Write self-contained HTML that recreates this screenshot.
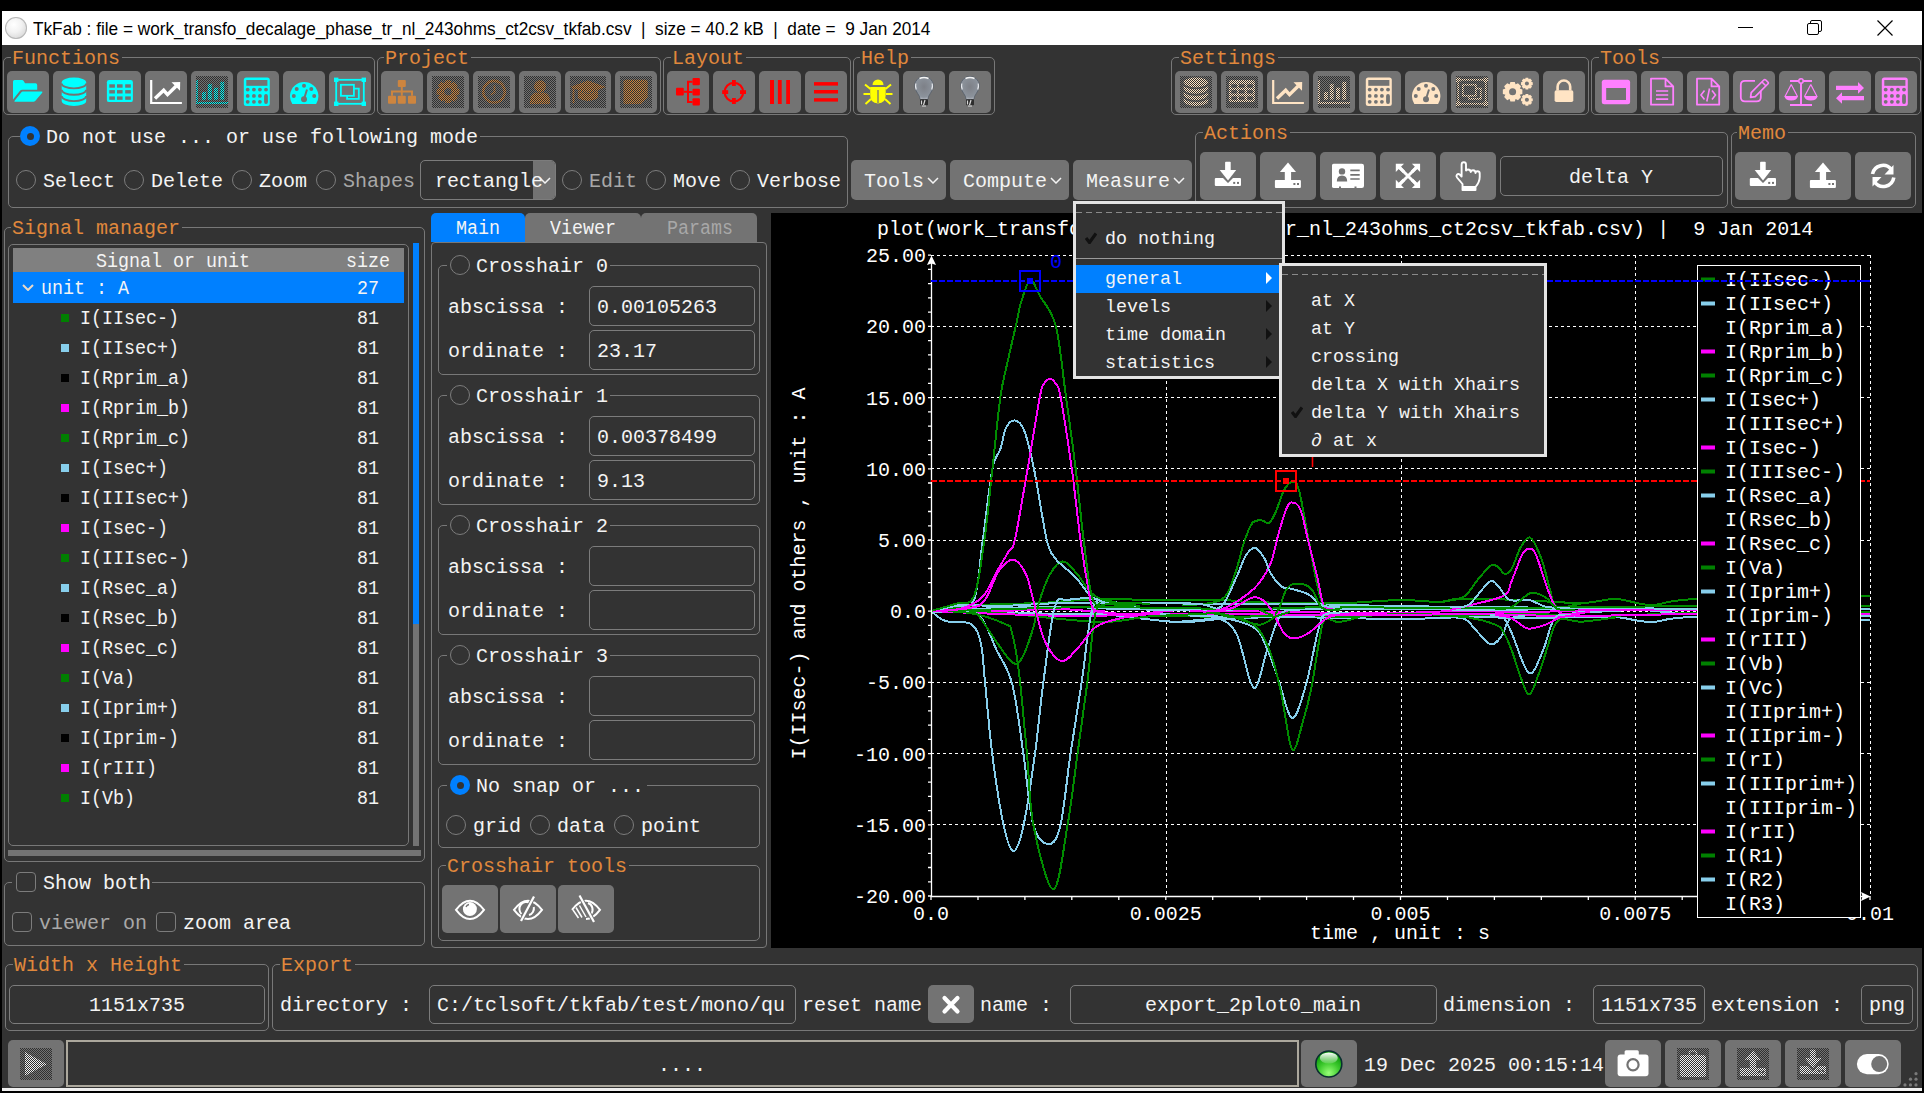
<!DOCTYPE html><html><head><meta charset="utf-8"><style>
html,body{margin:0;padding:0;background:#000;width:1924px;height:1093px;overflow:hidden}
body>div,body>svg,.a{position:absolute}
.m{font-family:"Liberation Mono",monospace;font-size:20px;line-height:20px;white-space:pre}
.s{font-family:"Liberation Sans",sans-serif}
</style></head><body>

<div style="left:2px;top:11px;width:1920px;height:34px;background:#fff"></div>
<div style="left:2px;top:45px;width:1920px;height:1043px;background:#333333"></div>
<div style="left:2px;top:1088px;width:1920px;height:3px;background:#f0f0f0"></div>
<div style="left:5px;top:17px;width:22px;height:22px;border-radius:50%;background:radial-gradient(circle at 40% 35%,#fff 0,#f2f2f2 40%,#c8c8c8 100%);box-shadow:inset 0 0 0 1px #b8b8b8"></div>
<div class="s" style="left:33px;top:19px;font-size:19px;line-height:20px;color:#000;white-space:pre;transform:scaleX(0.906);transform-origin:0 0">TkFab : file = work_transfo_decalage_phase_tr_nl_243ohms_ct2csv_tkfab.csv  |  size = 40.2 kB  |  date =  9 Jan 2014</div>
<div style="left:1738px;top:27px;width:15px;height:1px;background:#000"></div>
<svg style="left:1805px;top:18px" width="20" height="20"><rect x="2.5" y="5.5" width="11" height="11" rx="1.5" fill="none" stroke="#000" stroke-width="1"/><path d="M5.5 5.5 V4 a1.5 1.5 0 0 1 1.5 -1.5 H15 a1.5 1.5 0 0 1 1.5 1.5 V12 a1.5 1.5 0 0 1 -1.5 1.5 H13.5" fill="none" stroke="#000" stroke-width="1"/></svg>
<svg style="left:1876px;top:19px" width="18" height="18"><path d="M1.5 1.5 L16.5 16.5 M16.5 1.5 L1.5 16.5" stroke="#000" stroke-width="1.2"/></svg>
<div style="left:3px;top:57px;width:372px;height:58px;border:1px solid #787878;border-radius:5px;box-sizing:border-box"></div>
<div class="m" style="left:11px;top:49px;color:#e0883c;background:#333333;padding:0 2px 0 1px;">Functions</div>
<div style="left:377px;top:57px;width:284px;height:58px;border:1px solid #787878;border-radius:5px;box-sizing:border-box"></div>
<div class="m" style="left:384px;top:49px;color:#e0883c;background:#333333;padding:0 2px 0 1px;">Project</div>
<div style="left:663px;top:57px;width:188px;height:58px;border:1px solid #787878;border-radius:5px;box-sizing:border-box"></div>
<div class="m" style="left:671px;top:49px;color:#e0883c;background:#333333;padding:0 2px 0 1px;">Layout</div>
<div style="left:853px;top:57px;width:142px;height:58px;border:1px solid #787878;border-radius:5px;box-sizing:border-box"></div>
<div class="m" style="left:860px;top:49px;color:#e0883c;background:#333333;padding:0 2px 0 1px;">Help</div>
<div style="left:1171px;top:57px;width:418px;height:58px;border:1px solid #787878;border-radius:5px;box-sizing:border-box"></div>
<div class="m" style="left:1179px;top:49px;color:#e0883c;background:#333333;padding:0 2px 0 1px;">Settings</div>
<div style="left:1591px;top:57px;width:330px;height:58px;border:1px solid #787878;border-radius:5px;box-sizing:border-box"></div>
<div class="m" style="left:1599px;top:49px;color:#e0883c;background:#333333;padding:0 2px 0 1px;">Tools</div>
<div style="left:7px;top:71px;width:42px;height:42px;background:#737373;border-radius:5px"></div>
<div style="left:53px;top:71px;width:42px;height:42px;background:#737373;border-radius:5px"></div>
<div style="left:99px;top:71px;width:42px;height:42px;background:#737373;border-radius:5px"></div>
<div style="left:145px;top:71px;width:42px;height:42px;background:#737373;border-radius:5px"></div>
<div style="left:191px;top:71px;width:42px;height:42px;background:#737373;border-radius:5px"></div>
<div style="left:237px;top:71px;width:42px;height:42px;background:#737373;border-radius:5px"></div>
<div style="left:283px;top:71px;width:42px;height:42px;background:#737373;border-radius:5px"></div>
<div style="left:329px;top:71px;width:42px;height:42px;background:#737373;border-radius:5px"></div>
<svg style="left:12px;top:76px" width="32" height="32" viewBox="0 0 32 32"><path d="M1 5.5 Q1 4 2.5 4 H10 Q11 4 11.7 5 L13 7.2 H23.5 Q25.2 7.2 25.2 9 V13.8 H10.5 Q8.6 13.8 7.6 15.2 L1 23.5 Z" fill="#00ffff"/><path d="M10.6 15.6 H29.6 Q31 15.6 30.2 16.8 L23.2 25 Q22.4 25.8 21.5 25.8 H3 Q1.8 25.8 2.6 24.8 L9.4 16.3 Q9.9 15.6 10.6 15.6 Z" fill="#00ffff"/></svg>
<svg style="left:58px;top:76px" width="32" height="32" viewBox="0 0 32 32"><path d="M3.7 6.5 A12.25 5 0 0 1 28.2 6.5 V25 A12.25 5 0 0 1 3.7 25 Z" fill="#00ffff"/><path d="M3.7 7.4 A12.25 5 0 0 0 28.2 7.4 M3.7 13.8 A12.25 5 0 0 0 28.2 13.8 M3.7 20.1 A12.25 5 0 0 0 28.2 20.1" fill="none" stroke="#737373" stroke-width="1.9"/></svg>
<svg style="left:104px;top:76px" width="32" height="32" viewBox="0 0 32 32"><rect x="2.9" y="4" width="26" height="22.1" rx="2.2" fill="#00ffff"/><rect x="5.3" y="8.3" width="5.6" height="3.4" fill="#737373"/><rect x="5.3" y="14.1" width="5.6" height="3.4" fill="#737373"/><rect x="5.3" y="20.4" width="5.6" height="3.4" fill="#737373"/><rect x="13" y="8.3" width="5.6" height="3.4" fill="#737373"/><rect x="13" y="14.1" width="5.6" height="3.4" fill="#737373"/><rect x="13" y="20.4" width="5.6" height="3.4" fill="#737373"/><rect x="21.2" y="8.3" width="5.6" height="3.4" fill="#737373"/><rect x="21.2" y="14.1" width="5.6" height="3.4" fill="#737373"/><rect x="21.2" y="20.4" width="5.6" height="3.4" fill="#737373"/></svg>
<svg style="left:150px;top:76px" width="32" height="32" viewBox="0 0 32 32"><path d="M1.2 4 V27 H31.9" fill="none" stroke="#ffffff" stroke-width="2.2"/><path d="M5 22.5 L13.7 14.3 L17.5 18.6 L26 10.2" fill="none" stroke="#ffffff" stroke-width="3.4" stroke-linejoin="miter"/><path d="M21.5 6.2 L30.2 6 L30 14.7 Z" fill="#ffffff"/></svg>
<svg style="left:196px;top:76px" width="32" height="32" viewBox="0 0 32 32"><path d="M1 4 V27 H32" fill="none" stroke="#00ffff" stroke-width="1.8"/><rect x="6" y="16" width="3.9" height="7.7" fill="#00ffff"/><rect x="11.8" y="7.9" width="3.9" height="15.8" fill="#00ffff"/><rect x="18" y="11.7" width="3.9" height="12" fill="#00ffff"/><rect x="24.3" y="5.9" width="3.9" height="17.8" fill="#00ffff"/><defs><pattern id="st196_76" width="2" height="2" patternUnits="userSpaceOnUse"><rect width="1" height="1" fill="#303030"/><rect x="1" y="1" width="1" height="1" fill="#303030"/></pattern></defs><rect width="32" height="32" fill="url(#st196_76)" shape-rendering="crispEdges"/></svg>
<svg style="left:242px;top:76px" width="32" height="32" viewBox="0 0 32 32"><rect x="1.8" y="1.6" width="26" height="28.4" rx="2.5" fill="#00ffff"/><rect x="4.3" y="4" width="21.1" height="5.8" fill="#737373"/><circle cx="5.7" cy="13.6" r="1.9" fill="#737373"/><circle cx="5.7" cy="19.9" r="1.9" fill="#737373"/><circle cx="5.7" cy="25.8" r="1.9" fill="#737373"/><circle cx="11.9" cy="13.6" r="1.9" fill="#737373"/><circle cx="11.9" cy="19.9" r="1.9" fill="#737373"/><circle cx="11.9" cy="25.8" r="1.9" fill="#737373"/><circle cx="17.9" cy="13.6" r="1.9" fill="#737373"/><circle cx="17.9" cy="19.9" r="1.9" fill="#737373"/><circle cx="17.9" cy="25.8" r="1.9" fill="#737373"/><circle cx="24" cy="13.6" r="1.9" fill="#737373"/><rect x="22.1" y="18" width="3.8" height="10" rx="1.9" fill="#737373"/></svg>
<svg style="left:288px;top:76px" width="32" height="32" viewBox="0 0 32 32"><path d="M4.3 28 A14.2 14.2 0 1 1 28.1 28 Z" fill="#00ffff"/><circle cx="5.8" cy="19.9" r="2" fill="#737373"/><circle cx="8.7" cy="13" r="2" fill="#737373"/><circle cx="16" cy="9.8" r="2" fill="#737373"/><circle cx="23.3" cy="13" r="2" fill="#737373"/><circle cx="26.2" cy="19.9" r="2" fill="#737373"/><circle cx="16" cy="23.3" r="3" fill="#737373"/><path d="M16 23 L19 13.5" stroke="#737373" stroke-width="2"/></svg>
<svg style="left:334px;top:76px" width="32" height="32" viewBox="0 0 32 32"><rect x="2.2" y="3.8" width="27.6" height="24" fill="none" stroke="#00ffff" stroke-width="1.8"/><rect x="0" y="1.6" width="4.4" height="4.4" fill="#00ffff"/><rect x="27.6" y="1.6" width="4.4" height="4.4" fill="#00ffff"/><rect x="0" y="25.6" width="4.4" height="4.4" fill="#00ffff"/><rect x="27.6" y="25.6" width="4.4" height="4.4" fill="#00ffff"/><rect x="6.9" y="8.8" width="13" height="11" fill="none" stroke="#00ffff" stroke-width="1.8"/><path d="M19.9 12.6 H24.8 V22.8 H13.1 V19.8" fill="none" stroke="#00ffff" stroke-width="1.8"/></svg>
<div style="left:381px;top:71px;width:42px;height:42px;background:#737373;border-radius:5px"></div>
<div style="left:427px;top:71px;width:42px;height:42px;background:#737373;border-radius:5px"></div>
<div style="left:473px;top:71px;width:42px;height:42px;background:#737373;border-radius:5px"></div>
<div style="left:519px;top:71px;width:42px;height:42px;background:#737373;border-radius:5px"></div>
<div style="left:565px;top:71px;width:46px;height:42px;background:#737373;border-radius:5px"></div>
<div style="left:615px;top:71px;width:42px;height:42px;background:#737373;border-radius:5px"></div>
<svg style="left:386px;top:76px" width="32" height="32" viewBox="0 0 32 32"><rect x="11.8" y="4" width="8" height="7" rx="1" fill="#cd853f"/><rect x="2" y="19.8" width="8" height="8" rx="1" fill="#cd853f"/><rect x="11.8" y="19.8" width="8" height="8" rx="1" fill="#cd853f"/><rect x="22" y="19.8" width="8" height="8" rx="1" fill="#cd853f"/><path d="M15.8 11 V19.8 M6 19.8 V15.5 H26 V19.8" fill="none" stroke="#cd853f" stroke-width="2"/></svg>
<svg style="left:432px;top:76px" width="32" height="32" viewBox="0 0 32 32"><path d="M27.42 13.15 L27.42 18.25 L24.12 19.33 L24.30 18.88 L25.88 21.97 L22.27 25.58 L19.18 24.00 L19.63 23.82 L18.55 27.12 L13.45 27.12 L12.37 23.82 L12.82 24.00 L9.73 25.58 L6.12 21.97 L7.70 18.88 L7.88 19.33 L4.58 18.25 L4.58 13.15 L7.88 12.07 L7.70 12.52 L6.12 9.43 L9.73 5.82 L12.82 7.40 L12.37 7.58 L13.45 4.28 L18.55 4.28 L19.63 7.58 L19.18 7.40 L22.27 5.82 L25.88 9.43 L24.30 12.52 L24.12 12.07Z" fill="#cd853f"/><circle cx="16" cy="15.7" r="7.254" fill="#cd853f"/><circle cx="16" cy="15.7" r="3.6" fill="#737373"/><defs><pattern id="st432_76" width="2" height="2" patternUnits="userSpaceOnUse"><rect width="1" height="1" fill="#303030"/><rect x="1" y="1" width="1" height="1" fill="#303030"/></pattern></defs><rect width="32" height="32" fill="url(#st432_76)" shape-rendering="crispEdges"/></svg>
<svg style="left:478px;top:76px" width="32" height="32" viewBox="0 0 32 32"><circle cx="16" cy="15.7" r="10.8" fill="none" stroke="#cd853f" stroke-width="2.6"/><path d="M16.5 9.5 V16.5 L13 18.5" fill="none" stroke="#cd853f" stroke-width="1.8"/><defs><pattern id="st478_76" width="2" height="2" patternUnits="userSpaceOnUse"><rect width="1" height="1" fill="#303030"/><rect x="1" y="1" width="1" height="1" fill="#303030"/></pattern></defs><rect width="32" height="32" fill="url(#st478_76)" shape-rendering="crispEdges"/></svg>
<svg style="left:524px;top:76px" width="32" height="32" viewBox="0 0 32 32"><circle cx="16" cy="10.3" r="6" fill="#cd853f"/><path d="M5.7 27.9 Q5.7 17 12 16.5 H20 Q26.2 17 26.2 27.9 Z" fill="#cd853f"/><defs><pattern id="st524_76" width="2" height="2" patternUnits="userSpaceOnUse"><rect width="1" height="1" fill="#303030"/><rect x="1" y="1" width="1" height="1" fill="#303030"/></pattern></defs><rect width="32" height="32" fill="url(#st524_76)" shape-rendering="crispEdges"/></svg>
<svg style="left:570px;top:76px" width="36" height="32" viewBox="0 0 36 32"><path d="M0 11 L18 4.5 L36 11 L18 17.5 Z" fill="#cd853f"/><path d="M8 14 V22 Q18 28 28 22 V14 L18 18 Z" fill="#cd853f"/><path d="M3.5 12 V27" stroke="#cd853f" stroke-width="2"/><defs><pattern id="st570_76" width="2" height="2" patternUnits="userSpaceOnUse"><rect width="1" height="1" fill="#303030"/><rect x="1" y="1" width="1" height="1" fill="#303030"/></pattern></defs><rect width="36" height="32" fill="url(#st570_76)" shape-rendering="crispEdges"/></svg>
<svg style="left:620px;top:76px" width="32" height="32" viewBox="0 0 32 32"><path d="M5 3.7 H26 Q27.7 3.7 27.7 5.5 V21 L21.5 27.9 H5 Q3.5 27.9 3.5 26.2 V5.5 Q3.5 3.7 5 3.7 Z" fill="#cd853f"/><defs><pattern id="st620_76" width="2" height="2" patternUnits="userSpaceOnUse"><rect width="1" height="1" fill="#303030"/><rect x="1" y="1" width="1" height="1" fill="#303030"/></pattern></defs><rect width="32" height="32" fill="url(#st620_76)" shape-rendering="crispEdges"/></svg>
<div style="left:667px;top:71px;width:42px;height:42px;background:#737373;border-radius:5px"></div>
<div style="left:713px;top:71px;width:42px;height:42px;background:#737373;border-radius:5px"></div>
<div style="left:759px;top:71px;width:42px;height:42px;background:#737373;border-radius:5px"></div>
<div style="left:805px;top:71px;width:42px;height:42px;background:#737373;border-radius:5px"></div>
<svg style="left:672px;top:76px" width="32" height="32" viewBox="0 0 32 32"><rect x="4" y="11.8" width="7.8" height="7.8" rx="1" fill="#ff0000"/><rect x="20.5" y="2" width="7.4" height="7.3" rx="1" fill="#ff0000"/><rect x="20.5" y="12.7" width="7.4" height="6.9" rx="1" fill="#ff0000"/><rect x="20.5" y="22.2" width="7.4" height="7.4" rx="1" fill="#ff0000"/><path d="M11.8 15.7 H16 M20.5 5.7 H16 V25.9 H20.5 M16 16 H20.5" fill="none" stroke="#ff0000" stroke-width="2"/></svg>
<svg style="left:718px;top:76px" width="32" height="32" viewBox="0 0 32 32"><circle cx="15.9" cy="16.1" r="9.3" fill="none" stroke="#ff0000" stroke-width="2.2"/><rect x="14" y="4" width="3.8" height="6" fill="#ff0000"/><rect x="14" y="22" width="3.8" height="6" fill="#ff0000"/><rect x="4.2" y="14.2" width="6" height="3.8" fill="#ff0000"/><rect x="22" y="14.2" width="6" height="3.8" fill="#ff0000"/></svg>
<svg style="left:764px;top:76px" width="32" height="32" viewBox="0 0 32 32"><rect x="6" y="4" width="4" height="24" fill="#ff0000"/><rect x="13.9" y="4" width="3.8" height="24" fill="#ff0000"/><rect x="22.2" y="4" width="3.8" height="24" fill="#ff0000"/></svg>
<svg style="left:810px;top:76px" width="32" height="32" viewBox="0 0 32 32"><rect x="4" y="6.1" width="24" height="3.5" fill="#ff0000"/><rect x="4" y="14" width="24" height="3.5" fill="#ff0000"/><rect x="4" y="22.2" width="24" height="3.4" fill="#ff0000"/></svg>
<div style="left:857px;top:71px;width:42px;height:42px;background:#737373;border-radius:5px"></div>
<div style="left:903px;top:71px;width:42px;height:42px;background:#737373;border-radius:5px"></div>
<div style="left:949px;top:71px;width:42px;height:42px;background:#737373;border-radius:5px"></div>
<svg style="left:862px;top:76px" width="32" height="32" viewBox="0 0 32 32"><path d="M10.5 9 A5.5 5.5 0 0 1 21.5 9 Z" fill="#ffff00"/><path d="M8.2 11 H23.7 V19 Q23.7 27.4 16 27.4 Q8.2 27.4 8.2 19 Z" fill="#ffff00"/><path d="M8.5 13 L3 8.5 M23.5 13 L29 8.5 M8 18 H1.5 M24 18 H30.5 M9 23 L3.5 28 M23 23 L28.5 28" stroke="#ffff00" stroke-width="2"/><path d="M16 14 V27" stroke="#737373" stroke-width="1.3"/></svg>
<svg style="left:908px;top:76px" width="32" height="32" viewBox="0 0 32 32"><defs><radialGradient id="bg" cx="0.5" cy="0.45" r="0.6"><stop offset="0" stop-color="#7d8087"/><stop offset="0.75" stop-color="#8c939c"/><stop offset="1" stop-color="#c8ccd4"/></radialGradient></defs><path d="M16 0.4 A9.3 9.3 0 0 1 25.3 9.7 Q25.3 13.5 22.3 17.5 Q20 20.5 19.8 23.5 H12.2 Q12 20.5 9.7 17.5 Q6.7 13.5 6.7 9.7 A9.3 9.3 0 0 1 16 0.4 Z" fill="url(#bg)" stroke="#4e5764" stroke-width="0.7"/><path d="M11.5 2.5 Q16 0.5 20.5 2.5" stroke="#f4f4f4" stroke-width="1.6" fill="none"/><path d="M7.8 7.5 Q7.2 10.5 8.2 13.5 M24.2 7.5 Q24.8 10.5 23.8 13.5" stroke="#eef0f4" stroke-width="1.1" fill="none"/><rect x="12" y="23.3" width="8" height="6" rx="0.8" fill="#2e2e2e"/><path d="M13.5 24.5 V28.5 M17 24 L15.5 29" stroke="#d8d8d8" stroke-width="1.2"/><rect x="14" y="29.3" width="4" height="1.6" fill="#b0b0b0"/></svg>
<svg style="left:954px;top:76px" width="32" height="32" viewBox="0 0 32 32"><defs><radialGradient id="bg" cx="0.5" cy="0.45" r="0.6"><stop offset="0" stop-color="#7d8087"/><stop offset="0.75" stop-color="#8c939c"/><stop offset="1" stop-color="#c8ccd4"/></radialGradient></defs><path d="M16 0.4 A9.3 9.3 0 0 1 25.3 9.7 Q25.3 13.5 22.3 17.5 Q20 20.5 19.8 23.5 H12.2 Q12 20.5 9.7 17.5 Q6.7 13.5 6.7 9.7 A9.3 9.3 0 0 1 16 0.4 Z" fill="url(#bg)" stroke="#4e5764" stroke-width="0.7"/><path d="M11.5 2.5 Q16 0.5 20.5 2.5" stroke="#f4f4f4" stroke-width="1.6" fill="none"/><path d="M7.8 7.5 Q7.2 10.5 8.2 13.5 M24.2 7.5 Q24.8 10.5 23.8 13.5" stroke="#eef0f4" stroke-width="1.1" fill="none"/><rect x="12" y="23.3" width="8" height="6" rx="0.8" fill="#2e2e2e"/><path d="M13.5 24.5 V28.5 M17 24 L15.5 29" stroke="#d8d8d8" stroke-width="1.2"/><rect x="14" y="29.3" width="4" height="1.6" fill="#b0b0b0"/></svg>
<div style="left:1175px;top:71px;width:42px;height:42px;background:#737373;border-radius:5px"></div>
<div style="left:1221px;top:71px;width:42px;height:42px;background:#737373;border-radius:5px"></div>
<div style="left:1267px;top:71px;width:42px;height:42px;background:#737373;border-radius:5px"></div>
<div style="left:1313px;top:71px;width:42px;height:42px;background:#737373;border-radius:5px"></div>
<div style="left:1359px;top:71px;width:42px;height:42px;background:#737373;border-radius:5px"></div>
<div style="left:1405px;top:71px;width:42px;height:42px;background:#737373;border-radius:5px"></div>
<div style="left:1451px;top:71px;width:42px;height:42px;background:#737373;border-radius:5px"></div>
<div style="left:1497px;top:71px;width:42px;height:42px;background:#737373;border-radius:5px"></div>
<div style="left:1543px;top:71px;width:42px;height:42px;background:#737373;border-radius:5px"></div>
<svg style="left:1180px;top:76px" width="32" height="32" viewBox="0 0 32 32"><path d="M3.7 6.5 A12.25 5 0 0 1 28.2 6.5 V25 A12.25 5 0 0 1 3.7 25 Z" fill="#ffe4c4"/><path d="M3.7 7.4 A12.25 5 0 0 0 28.2 7.4 M3.7 13.8 A12.25 5 0 0 0 28.2 13.8 M3.7 20.1 A12.25 5 0 0 0 28.2 20.1" fill="none" stroke="#737373" stroke-width="1.9"/><defs><pattern id="st1180_76" width="2" height="2" patternUnits="userSpaceOnUse"><rect width="1" height="1" fill="#303030"/><rect x="1" y="1" width="1" height="1" fill="#303030"/></pattern></defs><rect width="32" height="32" fill="url(#st1180_76)" shape-rendering="crispEdges"/></svg>
<svg style="left:1226px;top:76px" width="32" height="32" viewBox="0 0 32 32"><rect x="2.9" y="4" width="26" height="22.1" rx="2.2" fill="#ffe4c4"/><rect x="5.3" y="8.3" width="5.6" height="3.4" fill="#737373"/><rect x="5.3" y="14.1" width="5.6" height="3.4" fill="#737373"/><rect x="5.3" y="20.4" width="5.6" height="3.4" fill="#737373"/><rect x="13" y="8.3" width="5.6" height="3.4" fill="#737373"/><rect x="13" y="14.1" width="5.6" height="3.4" fill="#737373"/><rect x="13" y="20.4" width="5.6" height="3.4" fill="#737373"/><rect x="21.2" y="8.3" width="5.6" height="3.4" fill="#737373"/><rect x="21.2" y="14.1" width="5.6" height="3.4" fill="#737373"/><rect x="21.2" y="20.4" width="5.6" height="3.4" fill="#737373"/><defs><pattern id="st1226_76" width="2" height="2" patternUnits="userSpaceOnUse"><rect width="1" height="1" fill="#303030"/><rect x="1" y="1" width="1" height="1" fill="#303030"/></pattern></defs><rect width="32" height="32" fill="url(#st1226_76)" shape-rendering="crispEdges"/></svg>
<svg style="left:1272px;top:76px" width="32" height="32" viewBox="0 0 32 32"><path d="M1.2 4 V27 H31.9" fill="none" stroke="#ffe4c4" stroke-width="2.2"/><path d="M5 22.5 L13.7 14.3 L17.5 18.6 L26 10.2" fill="none" stroke="#ffe4c4" stroke-width="3.4" stroke-linejoin="miter"/><path d="M21.5 6.2 L30.2 6 L30 14.7 Z" fill="#ffe4c4"/></svg>
<svg style="left:1318px;top:76px" width="32" height="32" viewBox="0 0 32 32"><path d="M1 4 V27 H32" fill="none" stroke="#ffe4c4" stroke-width="1.8"/><rect x="6" y="16" width="3.9" height="7.7" fill="#ffe4c4"/><rect x="11.8" y="7.9" width="3.9" height="15.8" fill="#ffe4c4"/><rect x="18" y="11.7" width="3.9" height="12" fill="#ffe4c4"/><rect x="24.3" y="5.9" width="3.9" height="17.8" fill="#ffe4c4"/><defs><pattern id="st1318_76" width="2" height="2" patternUnits="userSpaceOnUse"><rect width="1" height="1" fill="#303030"/><rect x="1" y="1" width="1" height="1" fill="#303030"/></pattern></defs><rect width="32" height="32" fill="url(#st1318_76)" shape-rendering="crispEdges"/></svg>
<svg style="left:1364px;top:76px" width="32" height="32" viewBox="0 0 32 32"><rect x="1.8" y="1.6" width="26" height="28.4" rx="2.5" fill="#ffe4c4"/><rect x="4.3" y="4" width="21.1" height="5.8" fill="#737373"/><circle cx="5.7" cy="13.6" r="1.9" fill="#737373"/><circle cx="5.7" cy="19.9" r="1.9" fill="#737373"/><circle cx="5.7" cy="25.8" r="1.9" fill="#737373"/><circle cx="11.9" cy="13.6" r="1.9" fill="#737373"/><circle cx="11.9" cy="19.9" r="1.9" fill="#737373"/><circle cx="11.9" cy="25.8" r="1.9" fill="#737373"/><circle cx="17.9" cy="13.6" r="1.9" fill="#737373"/><circle cx="17.9" cy="19.9" r="1.9" fill="#737373"/><circle cx="17.9" cy="25.8" r="1.9" fill="#737373"/><circle cx="24" cy="13.6" r="1.9" fill="#737373"/><rect x="22.1" y="18" width="3.8" height="10" rx="1.9" fill="#737373"/></svg>
<svg style="left:1410px;top:76px" width="32" height="32" viewBox="0 0 32 32"><path d="M4.3 28 A14.2 14.2 0 1 1 28.1 28 Z" fill="#ffe4c4"/><circle cx="5.8" cy="19.9" r="2" fill="#737373"/><circle cx="8.7" cy="13" r="2" fill="#737373"/><circle cx="16" cy="9.8" r="2" fill="#737373"/><circle cx="23.3" cy="13" r="2" fill="#737373"/><circle cx="26.2" cy="19.9" r="2" fill="#737373"/><circle cx="16" cy="23.3" r="3" fill="#737373"/><path d="M16 23 L19 13.5" stroke="#737373" stroke-width="2"/></svg>
<svg style="left:1456px;top:76px" width="32" height="32" viewBox="0 0 32 32"><rect x="2.2" y="3.8" width="27.6" height="24" fill="none" stroke="#ffe4c4" stroke-width="1.8"/><rect x="0" y="1.6" width="4.4" height="4.4" fill="#ffe4c4"/><rect x="27.6" y="1.6" width="4.4" height="4.4" fill="#ffe4c4"/><rect x="0" y="25.6" width="4.4" height="4.4" fill="#ffe4c4"/><rect x="27.6" y="25.6" width="4.4" height="4.4" fill="#ffe4c4"/><rect x="6.9" y="8.8" width="13" height="11" fill="none" stroke="#ffe4c4" stroke-width="1.8"/><path d="M19.9 12.6 H24.8 V22.8 H13.1 V19.8" fill="none" stroke="#ffe4c4" stroke-width="1.8"/><defs><pattern id="st1456_76" width="2" height="2" patternUnits="userSpaceOnUse"><rect width="1" height="1" fill="#303030"/><rect x="1" y="1" width="1" height="1" fill="#303030"/></pattern></defs><rect width="32" height="32" fill="url(#st1456_76)" shape-rendering="crispEdges"/></svg>
<svg style="left:1502px;top:76px" width="32" height="32" viewBox="0 0 32 32"><path d="M20.36 13.52 L20.36 17.88 L17.54 18.80 L17.70 18.42 L19.04 21.06 L15.96 24.14 L13.32 22.80 L13.70 22.64 L12.78 25.46 L8.42 25.46 L7.50 22.64 L7.88 22.80 L5.24 24.14 L2.16 21.06 L3.50 18.42 L3.66 18.80 L0.84 17.88 L0.84 13.52 L3.66 12.60 L3.50 12.98 L2.16 10.34 L5.24 7.26 L7.88 8.60 L7.50 8.76 L8.42 5.94 L12.78 5.94 L13.70 8.76 L13.32 8.60 L15.96 7.26 L19.04 10.34 L17.70 12.98 L17.54 12.60Z" fill="#ffe4c4"/><circle cx="10.6" cy="15.7" r="6.2" fill="#ffe4c4"/><circle cx="10.6" cy="15.7" r="3.5" fill="#737373"/><path d="M30.76 6.29 L30.76 8.91 L29.06 9.46 L29.16 9.23 L29.97 10.81 L28.11 12.67 L26.53 11.86 L26.76 11.76 L26.21 13.46 L23.59 13.46 L23.04 11.76 L23.27 11.86 L21.69 12.67 L19.83 10.81 L20.64 9.23 L20.74 9.46 L19.04 8.91 L19.04 6.29 L20.74 5.74 L20.64 5.97 L19.83 4.39 L21.69 2.53 L23.27 3.34 L23.04 3.44 L23.59 1.74 L26.21 1.74 L26.76 3.44 L26.53 3.34 L28.11 2.53 L29.97 4.39 L29.16 5.97 L29.06 5.74Z" fill="#ffe4c4"/><circle cx="24.9" cy="7.6" r="3.7199999999999998" fill="#ffe4c4"/><circle cx="24.9" cy="7.6" r="2" fill="#737373"/><path d="M30.76 22.49 L30.76 25.11 L29.06 25.66 L29.16 25.43 L29.97 27.01 L28.11 28.87 L26.53 28.06 L26.76 27.96 L26.21 29.66 L23.59 29.66 L23.04 27.96 L23.27 28.06 L21.69 28.87 L19.83 27.01 L20.64 25.43 L20.74 25.66 L19.04 25.11 L19.04 22.49 L20.74 21.94 L20.64 22.17 L19.83 20.59 L21.69 18.73 L23.27 19.54 L23.04 19.64 L23.59 17.94 L26.21 17.94 L26.76 19.64 L26.53 19.54 L28.11 18.73 L29.97 20.59 L29.16 22.17 L29.06 21.94Z" fill="#ffe4c4"/><circle cx="24.9" cy="23.8" r="3.7199999999999998" fill="#ffe4c4"/><circle cx="24.9" cy="23.8" r="2" fill="#737373"/></svg>
<svg style="left:1548px;top:76px" width="32" height="32" viewBox="0 0 32 32"><path d="M9.6 14.5 V10.8 A6.3 6.3 0 0 1 22.2 10.8 V14.5" fill="none" stroke="#ffe4c4" stroke-width="2.6"/><rect x="6.6" y="14.2" width="18.7" height="11.9" rx="1.8" fill="#ffe4c4"/></svg>
<div style="left:1595px;top:71px;width:42px;height:42px;background:#737373;border-radius:5px"></div>
<div style="left:1641px;top:71px;width:42px;height:42px;background:#737373;border-radius:5px"></div>
<div style="left:1687px;top:71px;width:42px;height:42px;background:#737373;border-radius:5px"></div>
<div style="left:1733px;top:71px;width:42px;height:42px;background:#737373;border-radius:5px"></div>
<div style="left:1779px;top:71px;width:46px;height:42px;background:#737373;border-radius:5px"></div>
<div style="left:1829px;top:71px;width:42px;height:42px;background:#737373;border-radius:5px"></div>
<div style="left:1875px;top:71px;width:42px;height:42px;background:#737373;border-radius:5px"></div>
<svg style="left:1600px;top:76px" width="32" height="32" viewBox="0 0 32 32"><rect x="1.8" y="3.7" width="28.3" height="24.5" rx="2.5" fill="#ff80ff"/><rect x="6.2" y="12" width="19.8" height="12" fill="#737373"/></svg>
<svg style="left:1646px;top:76px" width="32" height="32" viewBox="0 0 32 32"><path d="M5 2.7 H19.5 L27.2 10.4 V28.7 H5 Z M19.5 2.7 V10.4 H27.2" fill="none" stroke="#ff80ff" stroke-width="1.8" stroke-linejoin="round"/><path d="M10 15 H22.2 M10 19 H22.2 M10 23.1 H22.2" stroke="#ff80ff" stroke-width="1.6"/></svg>
<svg style="left:1692px;top:76px" width="32" height="32" viewBox="0 0 32 32"><path d="M5 2.7 H19.5 L27.2 10.4 V28.7 H5 Z M19.5 2.7 V10.4 H27.2" fill="none" stroke="#ff80ff" stroke-width="1.8" stroke-linejoin="round"/><path d="M12.5 14.5 L9 19 L12.5 23.5 M20 14.5 L23.5 19 L20 23.5 M17.5 12.5 L14.8 25.5" fill="none" stroke="#ff80ff" stroke-width="1.6"/></svg>
<svg style="left:1738px;top:76px" width="32" height="32" viewBox="0 0 32 32"><path d="M17 4.9 H7 Q2.8 4.9 2.8 9 V21.2 Q2.8 25.4 7 25.4 H18.6 Q22.8 25.4 22.8 21.2 V15" fill="none" stroke="#ff80ff" stroke-width="1.8"/><path d="M12.6 21.3 L13.2 16.6 L25.8 4 Q26.8 3 27.8 4 L29.8 6 Q30.8 7 29.8 8 L17.2 20.6 Z" fill="none" stroke="#ff80ff" stroke-width="1.7" stroke-linejoin="round"/><path d="M24 6 L27.8 9.8" stroke="#ff80ff" stroke-width="1.6"/></svg>
<svg style="left:1784px;top:76px" width="36" height="32" viewBox="0 0 36 32"><path d="M6 5 H28 M17 5 V28.8 M6 29 H28" stroke="#ff80ff" stroke-width="1.9"/><circle cx="17" cy="5" r="2.2" fill="#737373" stroke="#ff80ff" stroke-width="1.5"/><path d="M7.2 8.5 L1 20.5 M7.2 8.5 L13.5 20.5 M26.8 8.5 L20.5 20.5 M26.8 8.5 L33 20.5" stroke="#ff80ff" stroke-width="1.2"/><path d="M0.3 20 H14 Q13 24.6 7.2 24.6 Q1.3 24.6 0.3 20 Z M20 20 H33.7 Q32.7 24.6 26.8 24.6 Q21 24.6 20 20 Z" fill="#ff80ff"/></svg>
<svg style="left:1834px;top:76px" width="32" height="32" viewBox="0 0 32 32"><path d="M2 9.8 H24 V6 L30 12 L24 17.8 V14 H2 Z" fill="#ff80ff"/><path d="M30 20 H8 V16.3 L2 22.2 L8 27.7 V24.3 H30 Z" fill="#ff80ff"/></svg>
<svg style="left:1880px;top:76px" width="32" height="32" viewBox="0 0 32 32"><rect x="1.8" y="1.6" width="26" height="28.4" rx="2.5" fill="#ff80ff"/><rect x="4.3" y="4" width="21.1" height="5.8" fill="#737373"/><circle cx="5.7" cy="13.6" r="1.9" fill="#737373"/><circle cx="5.7" cy="19.9" r="1.9" fill="#737373"/><circle cx="5.7" cy="25.8" r="1.9" fill="#737373"/><circle cx="11.9" cy="13.6" r="1.9" fill="#737373"/><circle cx="11.9" cy="19.9" r="1.9" fill="#737373"/><circle cx="11.9" cy="25.8" r="1.9" fill="#737373"/><circle cx="17.9" cy="13.6" r="1.9" fill="#737373"/><circle cx="17.9" cy="19.9" r="1.9" fill="#737373"/><circle cx="17.9" cy="25.8" r="1.9" fill="#737373"/><circle cx="24" cy="13.6" r="1.9" fill="#737373"/><rect x="22.1" y="18" width="3.8" height="10" rx="1.9" fill="#737373"/></svg>
<div style="left:8px;top:136px;width:840px;height:72px;border:1px solid #787878;border-radius:5px;box-sizing:border-box"></div>
<div style="left:20px;top:126px;width:460px;height:20px;background:#333333"></div>
<div style="left:20px;top:126px;width:20px;height:20px;border-radius:50%;background:#0080ff"></div>
<div style="left:26.5px;top:132.5px;width:7px;height:7px;border-radius:50%;background:#333"></div>
<div class="m" style="left:46px;top:128px;color:#f4f4f4;">Do not use ... or use following mode</div>
<div style="left:16px;top:170px;width:20px;height:20px;border-radius:50%;border:1px solid #7c7c7c;box-sizing:border-box"></div>
<div class="m" style="left:43px;top:172px;color:#f4f4f4;">Select</div>
<div style="left:124px;top:170px;width:20px;height:20px;border-radius:50%;border:1px solid #7c7c7c;box-sizing:border-box"></div>
<div class="m" style="left:151px;top:172px;color:#f4f4f4;">Delete</div>
<div style="left:232px;top:170px;width:20px;height:20px;border-radius:50%;border:1px solid #7c7c7c;box-sizing:border-box"></div>
<div class="m" style="left:259px;top:172px;color:#f4f4f4;">Zoom</div>
<div style="left:316px;top:170px;width:20px;height:20px;border-radius:50%;border:1px solid #7c7c7c;box-sizing:border-box"></div>
<div class="m" style="left:343px;top:172px;color:#a8a8a8;">Shapes</div>
<div style="left:562px;top:170px;width:20px;height:20px;border-radius:50%;border:1px solid #7c7c7c;box-sizing:border-box"></div>
<div class="m" style="left:589px;top:172px;color:#a8a8a8;">Edit</div>
<div style="left:646px;top:170px;width:20px;height:20px;border-radius:50%;border:1px solid #7c7c7c;box-sizing:border-box"></div>
<div class="m" style="left:673px;top:172px;color:#f4f4f4;">Move</div>
<div style="left:730px;top:170px;width:20px;height:20px;border-radius:50%;border:1px solid #7c7c7c;box-sizing:border-box"></div>
<div class="m" style="left:757px;top:172px;color:#f4f4f4;">Verbose</div>
<div style="left:420px;top:160px;width:136px;height:40px;border:1px solid #7c7c7c;border-radius:5px;box-sizing:border-box"></div>
<div style="left:533px;top:161px;width:22px;height:38px;background:#737373;border-radius:0 4px 4px 0"></div>
<div class="m" style="left:435px;top:172px;color:#f4f4f4;">rectangle</div>
<svg style="left:539.0px;top:176.5px" width="12" height="7"><path d="M1 1 L6.0 6 L11 1" fill="none" stroke="#f4f4f4" stroke-width="1.5"/></svg>
<div style="left:851px;top:160px;width:95px;height:40px;background:#737373;border-radius:5px"></div>
<div class="m" style="left:864px;top:172px;color:#f4f4f4;">Tools</div>
<svg style="left:927.0px;top:176.5px" width="12" height="7"><path d="M1 1 L6.0 6 L11 1" fill="none" stroke="#f4f4f4" stroke-width="1.5"/></svg>
<div style="left:950px;top:160px;width:119px;height:40px;background:#737373;border-radius:5px"></div>
<div class="m" style="left:963px;top:172px;color:#f4f4f4;">Compute</div>
<svg style="left:1050.0px;top:176.5px" width="12" height="7"><path d="M1 1 L6.0 6 L11 1" fill="none" stroke="#f4f4f4" stroke-width="1.5"/></svg>
<div style="left:1073px;top:160px;width:119px;height:40px;background:#737373;border-radius:5px"></div>
<div class="m" style="left:1086px;top:172px;color:#f4f4f4;">Measure</div>
<svg style="left:1173.0px;top:176.5px" width="12" height="7"><path d="M1 1 L6.0 6 L11 1" fill="none" stroke="#f4f4f4" stroke-width="1.5"/></svg>
<div style="left:1195px;top:132px;width:533px;height:76px;border:1px solid #787878;border-radius:5px;box-sizing:border-box"></div>
<div class="m" style="left:1203px;top:124px;color:#e0883c;background:#333333;padding:0 2px 0 1px;">Actions</div>
<div style="left:1200px;top:152px;width:56px;height:48px;background:#737373;border-radius:5px"></div>
<div style="left:1260px;top:152px;width:56px;height:48px;background:#737373;border-radius:5px"></div>
<div style="left:1320px;top:152px;width:56px;height:48px;background:#737373;border-radius:5px"></div>
<div style="left:1380px;top:152px;width:56px;height:48px;background:#737373;border-radius:5px"></div>
<div style="left:1440px;top:152px;width:56px;height:48px;background:#737373;border-radius:5px"></div>
<svg style="left:1212px;top:160px" width="32" height="32" viewBox="0 0 32 32"><rect x="13.1" y="1.7" width="5.6" height="9.5" rx="0.8" fill="#ffffff"/><path d="M7.7 10.1 H24.2 L16 20.4 Z" fill="#ffffff"/><path d="M4 17.9 H11 L16 23 L21 17.9 H28 Q29 17.9 29 19 V25 Q29 26 28 26 H4 Q2.8 26 2.8 25 V19 Q2.8 17.9 4 17.9 Z" fill="#ffffff"/><rect x="21.2" y="21.9" width="2" height="2" fill="#737373"/><rect x="25" y="21.9" width="2" height="2" fill="#737373"/></svg>
<svg style="left:1272px;top:160px" width="32" height="32" viewBox="0 0 32 32"><path d="M16 2.6 L24 12 H7.9 Z" fill="#ffffff"/><rect x="12.8" y="11" width="6.3" height="9.5" rx="0.8" fill="#ffffff"/><rect x="2.9" y="20" width="26" height="7.9" rx="1" fill="#ffffff"/><rect x="21.4" y="23" width="2" height="2" fill="#737373"/><rect x="25" y="23" width="2" height="2" fill="#737373"/></svg>
<svg style="left:1332px;top:160px" width="32" height="32" viewBox="0 0 32 32"><rect x="-0.3" y="3.8" width="32.3" height="24.2" rx="2.2" fill="#ffffff"/><circle cx="10" cy="11.4" r="3.2" fill="#737373"/><path d="M4.8 21.5 Q4.8 15.5 10 15.5 Q15.2 15.5 15.2 21.5 Z" fill="#737373"/><path d="M18.3 10.4 H27.7 M18.3 14.8 H27.7 M18.3 19 H27.7" stroke="#737373" stroke-width="1.7"/><rect x="7" y="26.5" width="2" height="1.5" fill="#737373"/><rect x="22.5" y="26.5" width="2" height="1.5" fill="#737373"/></svg>
<svg style="left:1392px;top:160px" width="32" height="32" viewBox="0 0 32 32"><path d="M3.8 3.8 H12 L9 6.8 L13 10.8 L10.8 13 L6.8 9 L3.8 12 Z" fill="#ffffff"/><path d="M28.1 3.8 H19.9 L22.9 6.8 L18.9 10.8 L21.1 13 L25.1 9 L28.1 12 Z" fill="#ffffff"/><path d="M3.8 28 H12 L9 25 L13 21 L10.8 18.8 L6.8 22.8 L3.8 19.8 Z" fill="#ffffff"/><path d="M28.1 28 H19.9 L22.9 25 L18.9 21 L21.1 18.8 L25.1 22.8 L28.1 19.8 Z" fill="#ffffff"/><path d="M8 8 L24 24 M24 8 L8 24" stroke="#ffffff" stroke-width="3"/></svg>
<svg style="left:1452px;top:160px" width="32" height="32" viewBox="0 0 32 32"><path d="M10.5 27 V30 H23.5 V27 Q27.7 22 27.7 17 V13.5 Q27.7 11.3 25.4 11.3 Q23.5 11.3 23.5 13 Q23.5 10.3 21 10.3 Q19 10.3 18.7 12 Q18.5 9.5 16 9.5 Q14.5 9.5 14 10.5 V4.6 Q14 2.2 11.8 2.2 Q9.6 2.2 9.6 4.6 V16.5 L8 14.8 Q6.3 13.3 5 14.6 Q3.8 16 5 17.5 L10.5 24 Z" fill="none" stroke="#ffffff" stroke-width="1.9" stroke-linejoin="round"/><rect x="10.5" y="26" width="13" height="4" fill="#ffffff"/></svg>
<div style="left:1500px;top:156px;width:223px;height:40px;border:1px solid #7c7c7c;border-radius:5px;box-sizing:border-box"></div>
<div class="m" style="left:1569px;top:168px;color:#f4f4f4;">delta Y</div>
<div style="left:1731px;top:132px;width:185px;height:76px;border:1px solid #787878;border-radius:5px;box-sizing:border-box"></div>
<div class="m" style="left:1737px;top:124px;color:#e0883c;background:#333333;padding:0 2px 0 1px;">Memo</div>
<div style="left:1735px;top:152px;width:56px;height:48px;background:#737373;border-radius:5px"></div>
<div style="left:1795px;top:152px;width:56px;height:48px;background:#737373;border-radius:5px"></div>
<div style="left:1855px;top:152px;width:56px;height:48px;background:#737373;border-radius:5px"></div>
<svg style="left:1747px;top:160px" width="32" height="32" viewBox="0 0 32 32"><rect x="13.1" y="1.7" width="5.6" height="9.5" rx="0.8" fill="#ffffff"/><path d="M7.7 10.1 H24.2 L16 20.4 Z" fill="#ffffff"/><path d="M4 17.9 H11 L16 23 L21 17.9 H28 Q29 17.9 29 19 V25 Q29 26 28 26 H4 Q2.8 26 2.8 25 V19 Q2.8 17.9 4 17.9 Z" fill="#ffffff"/><rect x="21.2" y="21.9" width="2" height="2" fill="#737373"/><rect x="25" y="21.9" width="2" height="2" fill="#737373"/></svg>
<svg style="left:1807px;top:160px" width="32" height="32" viewBox="0 0 32 32"><path d="M16 2.6 L24 12 H7.9 Z" fill="#ffffff"/><rect x="12.8" y="11" width="6.3" height="9.5" rx="0.8" fill="#ffffff"/><rect x="2.9" y="20" width="26" height="7.9" rx="1" fill="#ffffff"/><rect x="21.4" y="23" width="2" height="2" fill="#737373"/><rect x="25" y="23" width="2" height="2" fill="#737373"/></svg>
<svg style="left:1867px;top:160px" width="32" height="32" viewBox="0 0 32 32"><path d="M5.5 14 A10.6 10.6 0 0 1 24.3 9.5" fill="none" stroke="#ffffff" stroke-width="3.6"/><path d="M26.5 5 V14.5 H17.5 Z" fill="#ffffff"/><path d="M26.8 17.5 A10.6 10.6 0 0 1 7.7 22" fill="none" stroke="#ffffff" stroke-width="3.6"/><path d="M5.5 26.5 V17 H14.5 Z" fill="#ffffff"/></svg>
<div style="left:4px;top:227px;width:421px;height:635px;border:1px solid #787878;border-radius:5px;box-sizing:border-box"></div>
<div class="m" style="left:11px;top:219px;color:#e0883c;background:#333333;padding:0 2px 0 1px;">Signal manager</div>
<div style="left:8px;top:244px;width:401px;height:602px;border:1px solid #787878;border-radius:5px;box-sizing:border-box"></div>
<div style="left:13px;top:248px;width:391px;height:24px;background:#808080"></div>
<div class="m" style="left:96px;top:252px;color:#f4f4f4;transform:scaleX(0.9167);transform-origin:0 0;">Signal or unit</div>
<div class="m" style="left:346px;top:252px;color:#f4f4f4;transform:scaleX(0.9167);transform-origin:0 0;">size</div>
<div style="left:13px;top:272px;width:391px;height:31px;background:#0080ff"></div>
<svg style="left:22.0px;top:283.5px" width="12" height="7"><path d="M1 1 L6.0 6 L11 1" fill="none" stroke="#e8d8c8" stroke-width="2"/></svg>
<div class="m" style="left:41px;top:279px;color:#f4f4f4;transform:scaleX(0.9167);transform-origin:0 0;">unit : A</div>
<div class="m" style="left:357px;top:279px;color:#f4f4f4;transform:scaleX(0.9167);transform-origin:0 0;">27</div>
<div style="left:61px;top:314px;width:8px;height:8px;background:#008000"></div>
<div class="m" style="left:80px;top:309px;color:#f4f4f4;transform:scaleX(0.9167);transform-origin:0 0;">I(IIsec-)</div>
<div class="m" style="left:357px;top:309px;color:#f4f4f4;transform:scaleX(0.9167);transform-origin:0 0;">81</div>
<div style="left:61px;top:344px;width:8px;height:8px;background:#87ceeb"></div>
<div class="m" style="left:80px;top:339px;color:#f4f4f4;transform:scaleX(0.9167);transform-origin:0 0;">I(IIsec+)</div>
<div class="m" style="left:357px;top:339px;color:#f4f4f4;transform:scaleX(0.9167);transform-origin:0 0;">81</div>
<div style="left:61px;top:374px;width:8px;height:8px;background:#000000"></div>
<div class="m" style="left:80px;top:369px;color:#f4f4f4;transform:scaleX(0.9167);transform-origin:0 0;">I(Rprim_a)</div>
<div class="m" style="left:357px;top:369px;color:#f4f4f4;transform:scaleX(0.9167);transform-origin:0 0;">81</div>
<div style="left:61px;top:404px;width:8px;height:8px;background:#ff00ff"></div>
<div class="m" style="left:80px;top:399px;color:#f4f4f4;transform:scaleX(0.9167);transform-origin:0 0;">I(Rprim_b)</div>
<div class="m" style="left:357px;top:399px;color:#f4f4f4;transform:scaleX(0.9167);transform-origin:0 0;">81</div>
<div style="left:61px;top:434px;width:8px;height:8px;background:#008000"></div>
<div class="m" style="left:80px;top:429px;color:#f4f4f4;transform:scaleX(0.9167);transform-origin:0 0;">I(Rprim_c)</div>
<div class="m" style="left:357px;top:429px;color:#f4f4f4;transform:scaleX(0.9167);transform-origin:0 0;">81</div>
<div style="left:61px;top:464px;width:8px;height:8px;background:#87ceeb"></div>
<div class="m" style="left:80px;top:459px;color:#f4f4f4;transform:scaleX(0.9167);transform-origin:0 0;">I(Isec+)</div>
<div class="m" style="left:357px;top:459px;color:#f4f4f4;transform:scaleX(0.9167);transform-origin:0 0;">81</div>
<div style="left:61px;top:494px;width:8px;height:8px;background:#000000"></div>
<div class="m" style="left:80px;top:489px;color:#f4f4f4;transform:scaleX(0.9167);transform-origin:0 0;">I(IIIsec+)</div>
<div class="m" style="left:357px;top:489px;color:#f4f4f4;transform:scaleX(0.9167);transform-origin:0 0;">81</div>
<div style="left:61px;top:524px;width:8px;height:8px;background:#ff00ff"></div>
<div class="m" style="left:80px;top:519px;color:#f4f4f4;transform:scaleX(0.9167);transform-origin:0 0;">I(Isec-)</div>
<div class="m" style="left:357px;top:519px;color:#f4f4f4;transform:scaleX(0.9167);transform-origin:0 0;">81</div>
<div style="left:61px;top:554px;width:8px;height:8px;background:#008000"></div>
<div class="m" style="left:80px;top:549px;color:#f4f4f4;transform:scaleX(0.9167);transform-origin:0 0;">I(IIIsec-)</div>
<div class="m" style="left:357px;top:549px;color:#f4f4f4;transform:scaleX(0.9167);transform-origin:0 0;">81</div>
<div style="left:61px;top:584px;width:8px;height:8px;background:#87ceeb"></div>
<div class="m" style="left:80px;top:579px;color:#f4f4f4;transform:scaleX(0.9167);transform-origin:0 0;">I(Rsec_a)</div>
<div class="m" style="left:357px;top:579px;color:#f4f4f4;transform:scaleX(0.9167);transform-origin:0 0;">81</div>
<div style="left:61px;top:614px;width:8px;height:8px;background:#000000"></div>
<div class="m" style="left:80px;top:609px;color:#f4f4f4;transform:scaleX(0.9167);transform-origin:0 0;">I(Rsec_b)</div>
<div class="m" style="left:357px;top:609px;color:#f4f4f4;transform:scaleX(0.9167);transform-origin:0 0;">81</div>
<div style="left:61px;top:644px;width:8px;height:8px;background:#ff00ff"></div>
<div class="m" style="left:80px;top:639px;color:#f4f4f4;transform:scaleX(0.9167);transform-origin:0 0;">I(Rsec_c)</div>
<div class="m" style="left:357px;top:639px;color:#f4f4f4;transform:scaleX(0.9167);transform-origin:0 0;">81</div>
<div style="left:61px;top:674px;width:8px;height:8px;background:#008000"></div>
<div class="m" style="left:80px;top:669px;color:#f4f4f4;transform:scaleX(0.9167);transform-origin:0 0;">I(Va)</div>
<div class="m" style="left:357px;top:669px;color:#f4f4f4;transform:scaleX(0.9167);transform-origin:0 0;">81</div>
<div style="left:61px;top:704px;width:8px;height:8px;background:#87ceeb"></div>
<div class="m" style="left:80px;top:699px;color:#f4f4f4;transform:scaleX(0.9167);transform-origin:0 0;">I(Iprim+)</div>
<div class="m" style="left:357px;top:699px;color:#f4f4f4;transform:scaleX(0.9167);transform-origin:0 0;">81</div>
<div style="left:61px;top:734px;width:8px;height:8px;background:#000000"></div>
<div class="m" style="left:80px;top:729px;color:#f4f4f4;transform:scaleX(0.9167);transform-origin:0 0;">I(Iprim-)</div>
<div class="m" style="left:357px;top:729px;color:#f4f4f4;transform:scaleX(0.9167);transform-origin:0 0;">81</div>
<div style="left:61px;top:764px;width:8px;height:8px;background:#ff00ff"></div>
<div class="m" style="left:80px;top:759px;color:#f4f4f4;transform:scaleX(0.9167);transform-origin:0 0;">I(rIII)</div>
<div class="m" style="left:357px;top:759px;color:#f4f4f4;transform:scaleX(0.9167);transform-origin:0 0;">81</div>
<div style="left:61px;top:794px;width:8px;height:8px;background:#008000"></div>
<div class="m" style="left:80px;top:789px;color:#f4f4f4;transform:scaleX(0.9167);transform-origin:0 0;">I(Vb)</div>
<div class="m" style="left:357px;top:789px;color:#f4f4f4;transform:scaleX(0.9167);transform-origin:0 0;">81</div>
<div style="left:413px;top:243px;width:6px;height:381px;background:#0080ff"></div>
<div style="left:413px;top:624px;width:6px;height:222px;background:#737373"></div>
<div style="left:8px;top:850px;width:413px;height:6px;background:#737373"></div>
<div style="left:4px;top:882px;width:421px;height:64px;border:1px solid #787878;border-radius:5px;box-sizing:border-box"></div>
<div style="left:12px;top:870px;width:140px;height:24px;background:#333333"></div>
<div style="left:16px;top:872px;width:20px;height:20px;border:1px solid #7c7c7c;border-radius:4px;box-sizing:border-box"></div>
<div class="m" style="left:43px;top:874px;color:#f4f4f4;">Show both</div>
<div style="left:12px;top:912px;width:20px;height:20px;border:1px solid #7c7c7c;border-radius:4px;box-sizing:border-box"></div>
<div class="m" style="left:39px;top:914px;color:#a8a8a8;">viewer on</div>
<div style="left:156px;top:912px;width:20px;height:20px;border:1px solid #7c7c7c;border-radius:4px;box-sizing:border-box"></div>
<div class="m" style="left:183px;top:914px;color:#f4f4f4;">zoom area</div>
<div style="left:431px;top:213px;width:94px;height:29px;background:#0080ff;border-radius:5px 5px 0 0"></div>
<div style="left:525px;top:213px;width:116px;height:29px;background:#737373;border-radius:5px 5px 0 0"></div>
<div style="left:641px;top:213px;width:116px;height:29px;background:#737373;border-radius:5px 5px 0 0"></div>
<div class="m" style="left:456px;top:219px;color:#f4f4f4;transform:scaleX(0.9167);transform-origin:0 0;">Main</div>
<div class="m" style="left:550px;top:219px;color:#f4f4f4;transform:scaleX(0.9167);transform-origin:0 0;">Viewer</div>
<div class="m" style="left:667px;top:219px;color:#a8a8a8;transform:scaleX(0.9167);transform-origin:0 0;">Params</div>
<div style="left:431px;top:242px;width:336px;height:706px;border:1px solid #787878;border-radius:4px;box-sizing:border-box"></div>
<div style="left:438px;top:265px;width:322px;height:110px;border:1px solid #787878;border-radius:5px;box-sizing:border-box"></div>
<div style="left:447px;top:253px;width:163px;height:24px;background:#333333"></div>
<div style="left:450px;top:255px;width:20px;height:20px;border-radius:50%;border:1px solid #7c7c7c;box-sizing:border-box"></div>
<div class="m" style="left:476px;top:257px;color:#f4f4f4;">Crosshair 0</div>
<div class="m" style="left:448px;top:298px;color:#f4f4f4;">abscissa :</div>
<div class="m" style="left:448px;top:342px;color:#f4f4f4;">ordinate :</div>
<div style="left:589px;top:286px;width:166px;height:40px;border:1px solid #7c7c7c;border-radius:5px;box-sizing:border-box"></div>
<div style="left:589px;top:330px;width:166px;height:40px;border:1px solid #7c7c7c;border-radius:5px;box-sizing:border-box"></div>
<div style="left:438px;top:395px;width:322px;height:110px;border:1px solid #787878;border-radius:5px;box-sizing:border-box"></div>
<div style="left:447px;top:383px;width:163px;height:24px;background:#333333"></div>
<div style="left:450px;top:385px;width:20px;height:20px;border-radius:50%;border:1px solid #7c7c7c;box-sizing:border-box"></div>
<div class="m" style="left:476px;top:387px;color:#f4f4f4;">Crosshair 1</div>
<div class="m" style="left:448px;top:428px;color:#f4f4f4;">abscissa :</div>
<div class="m" style="left:448px;top:472px;color:#f4f4f4;">ordinate :</div>
<div style="left:589px;top:416px;width:166px;height:40px;border:1px solid #7c7c7c;border-radius:5px;box-sizing:border-box"></div>
<div style="left:589px;top:460px;width:166px;height:40px;border:1px solid #7c7c7c;border-radius:5px;box-sizing:border-box"></div>
<div style="left:438px;top:525px;width:322px;height:110px;border:1px solid #787878;border-radius:5px;box-sizing:border-box"></div>
<div style="left:447px;top:513px;width:163px;height:24px;background:#333333"></div>
<div style="left:450px;top:515px;width:20px;height:20px;border-radius:50%;border:1px solid #7c7c7c;box-sizing:border-box"></div>
<div class="m" style="left:476px;top:517px;color:#f4f4f4;">Crosshair 2</div>
<div class="m" style="left:448px;top:558px;color:#f4f4f4;">abscissa :</div>
<div class="m" style="left:448px;top:602px;color:#f4f4f4;">ordinate :</div>
<div style="left:589px;top:546px;width:166px;height:40px;border:1px solid #7c7c7c;border-radius:5px;box-sizing:border-box"></div>
<div style="left:589px;top:590px;width:166px;height:40px;border:1px solid #7c7c7c;border-radius:5px;box-sizing:border-box"></div>
<div style="left:438px;top:655px;width:322px;height:110px;border:1px solid #787878;border-radius:5px;box-sizing:border-box"></div>
<div style="left:447px;top:643px;width:163px;height:24px;background:#333333"></div>
<div style="left:450px;top:645px;width:20px;height:20px;border-radius:50%;border:1px solid #7c7c7c;box-sizing:border-box"></div>
<div class="m" style="left:476px;top:647px;color:#f4f4f4;">Crosshair 3</div>
<div class="m" style="left:448px;top:688px;color:#f4f4f4;">abscissa :</div>
<div class="m" style="left:448px;top:732px;color:#f4f4f4;">ordinate :</div>
<div style="left:589px;top:676px;width:166px;height:40px;border:1px solid #7c7c7c;border-radius:5px;box-sizing:border-box"></div>
<div style="left:589px;top:720px;width:166px;height:40px;border:1px solid #7c7c7c;border-radius:5px;box-sizing:border-box"></div>
<div class="m" style="left:597px;top:298px;color:#f4f4f4;">0.00105263</div>
<div class="m" style="left:597px;top:342px;color:#f4f4f4;">23.17</div>
<div class="m" style="left:597px;top:428px;color:#f4f4f4;">0.00378499</div>
<div class="m" style="left:597px;top:472px;color:#f4f4f4;">9.13</div>
<div style="left:438px;top:785px;width:322px;height:63px;border:1px solid #787878;border-radius:5px;box-sizing:border-box"></div>
<div style="left:447px;top:773px;width:200px;height:24px;background:#333333"></div>
<div style="left:450px;top:775px;width:20px;height:20px;border-radius:50%;background:#0080ff"></div>
<div style="left:456.5px;top:781.5px;width:7px;height:7px;border-radius:50%;background:#333"></div>
<div class="m" style="left:476px;top:777px;color:#f4f4f4;">No snap or ...</div>
<div style="left:446px;top:815px;width:20px;height:20px;border-radius:50%;border:1px solid #7c7c7c;box-sizing:border-box"></div>
<div class="m" style="left:473px;top:817px;color:#f4f4f4;">grid</div>
<div style="left:530px;top:815px;width:20px;height:20px;border-radius:50%;border:1px solid #7c7c7c;box-sizing:border-box"></div>
<div class="m" style="left:557px;top:817px;color:#f4f4f4;">data</div>
<div style="left:614px;top:815px;width:20px;height:20px;border-radius:50%;border:1px solid #7c7c7c;box-sizing:border-box"></div>
<div class="m" style="left:641px;top:817px;color:#f4f4f4;">point</div>
<div style="left:438px;top:865px;width:322px;height:76px;border:1px solid #787878;border-radius:5px;box-sizing:border-box"></div>
<div class="m" style="left:446px;top:857px;color:#e0883c;background:#333333;padding:0 2px 0 1px;">Crosshair tools</div>
<div style="left:442px;top:885px;width:56px;height:48px;background:#737373;border-radius:5px"></div>
<div style="left:500px;top:885px;width:56px;height:48px;background:#737373;border-radius:5px"></div>
<div style="left:558px;top:885px;width:56px;height:48px;background:#737373;border-radius:5px"></div>
<svg style="left:454px;top:893px" width="32" height="32" viewBox="0 0 32 32"><path d="M2 16.8 Q9 7.7 16 7.7 Q23 7.7 30 16.8 Q23 26 16 26 Q9 26 2 16.8 Z" fill="none" stroke="#ffffff" stroke-width="2"/><circle cx="15.9" cy="16.1" r="7" fill="#ffffff"/><path d="M12 14 A4 4 0 0 1 15 11.5" stroke="#737373" stroke-width="1.3" fill="none"/></svg>
<svg style="left:512px;top:893px" width="32" height="32" viewBox="0 0 32 32"><path d="M2 16.8 Q9 7.7 16 7.7 Q23 7.7 30 16.8 Q23 26 16 26 Q9 26 2 16.8 Z" fill="none" stroke="#ffffff" stroke-width="2"/><path d="M9.5 21 A7 7 0 0 1 18 10 M21.8 14 A7 7 0 0 1 17 22" fill="none" stroke="#ffffff" stroke-width="2"/><path d="M9 28 L22 3.5" stroke="#737373" stroke-width="4"/><path d="M9 28 L22 3.5" stroke="#ffffff" stroke-width="2.2"/></svg>
<svg style="left:570px;top:893px" width="32" height="32" viewBox="0 0 32 32"><path d="M2 16.8 Q9 7.7 16 7.7 Q23 7.7 30 16.8 Q23 26 16 26" fill="none" stroke="#ffffff" stroke-width="2"/><path d="M18 10 A7 7 0 0 1 21 21" fill="none" stroke="#ffffff" stroke-width="2"/><path d="M9.5 2.5 L24 29" stroke="#737373" stroke-width="4"/><path d="M9.5 2.5 L24 29" stroke="#ffffff" stroke-width="2.2"/><path d="M3 17 L8.5 25 M6 14.5 L12 24.5 M9.5 12.5 L16 24" stroke="#ffffff" stroke-width="1.5"/></svg>
<svg style="left:771px;top:213px" width="1151" height="735" viewBox="771 213 1151 735" font-family="Liberation Mono" font-size="20">
<rect x="771" y="213" width="1151" height="735" fill="#000"/>
<path d="M931 255.5 H1870" stroke="#fff" stroke-width="1" stroke-dasharray="3 3"/>
<path d="M931 326.5 H1870" stroke="#fff" stroke-width="1" stroke-dasharray="3 3"/>
<path d="M931 397.5 H1870" stroke="#fff" stroke-width="1" stroke-dasharray="3 3"/>
<path d="M931 468.5 H1870" stroke="#fff" stroke-width="1" stroke-dasharray="3 3"/>
<path d="M931 540.5 H1870" stroke="#fff" stroke-width="1" stroke-dasharray="3 3"/>
<path d="M931 611.5 H1870" stroke="#fff" stroke-width="1" stroke-dasharray="3 3"/>
<path d="M931 682.5 H1870" stroke="#fff" stroke-width="1" stroke-dasharray="3 3"/>
<path d="M931 753.5 H1870" stroke="#fff" stroke-width="1" stroke-dasharray="3 3"/>
<path d="M931 824.5 H1870" stroke="#fff" stroke-width="1" stroke-dasharray="3 3"/>
<path d="M1166.5 255 V896" stroke="#fff" stroke-width="1" stroke-dasharray="3 3"/>
<path d="M1401.5 255 V896" stroke="#fff" stroke-width="1" stroke-dasharray="3 3"/>
<path d="M1635.5 255 V896" stroke="#fff" stroke-width="1" stroke-dasharray="3 3"/>
<path d="M1870.5 255 V896" stroke="#fff" stroke-width="1" stroke-dasharray="3 3"/>
<path d="M931.0 611.0 C937.5 610.2 958.5 607.2 970.0 606.0 C981.5 604.8 988.3 604.5 1000.0 604.0 C1011.7 603.5 1023.3 603.8 1040.0 603.0 C1056.7 602.2 1081.7 599.5 1100.0 599.0 C1118.3 598.5 1130.0 599.8 1150.0 600.0 C1170.0 600.2 1203.3 599.7 1220.0 600.0 C1236.7 600.3 1236.7 601.5 1250.0 602.0 C1263.3 602.5 1283.8 602.8 1300.0 603.0 C1316.2 603.2 1330.3 603.5 1347.0 603.0 C1363.7 602.5 1384.5 600.2 1400.0 600.0 C1415.5 599.8 1430.3 602.2 1440.0 602.0 C1449.7 601.8 1444.7 599.3 1458.0 599.0 C1471.3 598.7 1499.5 599.3 1520.0 600.0 C1540.5 600.7 1565.0 603.2 1581.0 603.0 C1597.0 602.8 1604.3 598.7 1616.0 599.0 C1627.7 599.3 1637.5 605.0 1651.0 605.0 C1664.5 605.0 1660.5 600.5 1697.0 599.0 C1733.5 597.5 1841.2 596.5 1870.0 596.0" fill="none" stroke="#008c00" stroke-width="2" stroke-linejoin="round" shape-rendering="crispEdges"/>
<path d="M931.0 611.0 C935.8 610.0 948.5 605.8 960.0 605.0 C971.5 604.2 983.3 606.3 1000.0 606.0 C1016.7 605.7 1043.3 603.5 1060.0 603.0 C1076.7 602.5 1083.3 603.0 1100.0 603.0 C1116.7 603.0 1140.0 602.8 1160.0 603.0 C1180.0 603.2 1196.7 603.8 1220.0 604.0 C1243.3 604.2 1280.0 603.8 1300.0 604.0 C1320.0 604.2 1323.3 604.7 1340.0 605.0 C1356.7 605.3 1380.0 605.7 1400.0 606.0 C1420.0 606.3 1440.0 606.8 1460.0 607.0 C1480.0 607.2 1499.8 606.2 1520.0 607.0 C1540.2 607.8 1561.0 611.5 1581.0 612.0 C1601.0 612.5 1620.7 609.7 1640.0 610.0 C1659.3 610.3 1658.7 613.0 1697.0 614.0 C1735.3 615.0 1841.2 615.7 1870.0 616.0" fill="none" stroke="#87ceeb" stroke-width="2" stroke-linejoin="round" shape-rendering="crispEdges"/>
<path d="M931.0 612.0 C940.8 612.0 968.5 611.7 990.0 612.0 C1011.5 612.3 1041.7 613.7 1060.0 614.0 C1078.3 614.3 1080.5 612.7 1100.0 614.0 C1119.5 615.3 1156.8 621.2 1177.0 622.0 C1197.2 622.8 1203.8 619.8 1221.0 619.0 C1238.2 618.2 1260.2 617.2 1280.0 617.0 C1299.8 616.8 1320.0 617.7 1340.0 618.0 C1360.0 618.3 1383.3 619.0 1400.0 619.0 C1416.7 619.0 1428.7 618.3 1440.0 618.0 C1451.3 617.7 1453.0 617.0 1468.0 617.0 C1483.0 617.0 1511.2 618.0 1530.0 618.0 C1548.8 618.0 1566.7 617.2 1581.0 617.0 C1595.3 616.8 1604.3 616.2 1616.0 617.0 C1627.7 617.8 1637.5 622.0 1651.0 622.0 C1664.5 622.0 1660.5 617.3 1697.0 617.0 C1733.5 616.7 1841.2 619.5 1870.0 620.0" fill="none" stroke="#87ceeb" stroke-width="2" stroke-linejoin="round" shape-rendering="crispEdges"/>
<path d="M931.0 611.0 C942.5 611.0 978.5 611.3 1000.0 611.0 C1021.5 610.7 1038.8 608.5 1060.0 609.0 C1081.2 609.5 1106.7 613.8 1127.0 614.0 C1147.3 614.2 1164.8 610.5 1182.0 610.0 C1199.2 609.5 1212.0 610.7 1230.0 611.0 C1248.0 611.3 1270.0 611.7 1290.0 612.0 C1310.0 612.3 1331.7 612.8 1350.0 613.0 C1368.3 613.2 1381.7 613.3 1400.0 613.0 C1418.3 612.7 1438.3 611.2 1460.0 611.0 C1481.7 610.8 1506.7 612.2 1530.0 612.0 C1553.3 611.8 1572.2 610.3 1600.0 610.0 C1627.8 609.7 1652.0 609.7 1697.0 610.0 C1742.0 610.3 1841.2 611.7 1870.0 612.0" fill="none" stroke="#ff00ff" stroke-width="2" stroke-linejoin="round" shape-rendering="crispEdges"/>
<path d="M931.0 611.0 C942.5 611.3 971.8 611.2 1000.0 613.0 C1028.2 614.8 1074.2 621.5 1100.0 622.0 C1125.8 622.5 1133.3 616.8 1155.0 616.0 C1176.7 615.2 1205.8 617.2 1230.0 617.0 C1254.2 616.8 1280.8 615.0 1300.0 615.0 C1319.2 615.0 1328.3 617.2 1345.0 617.0 C1361.7 616.8 1380.8 614.3 1400.0 614.0 C1419.2 613.7 1438.3 615.0 1460.0 615.0 C1481.7 615.0 1506.7 613.8 1530.0 614.0 C1553.3 614.2 1572.2 616.2 1600.0 616.0 C1627.8 615.8 1652.0 613.7 1697.0 613.0 C1742.0 612.3 1841.2 612.2 1870.0 612.0" fill="none" stroke="#008c00" stroke-width="2" stroke-linejoin="round" shape-rendering="crispEdges"/>
<path d="M931.0 611.0 C942.5 610.5 976.8 608.7 1000.0 608.0 C1023.2 607.3 1050.0 606.8 1070.0 607.0 C1090.0 607.2 1098.3 608.5 1120.0 609.0 C1141.7 609.5 1176.7 610.0 1200.0 610.0 C1223.3 610.0 1238.3 609.2 1260.0 609.0 C1281.7 608.8 1303.3 609.0 1330.0 609.0 C1356.7 609.0 1391.7 608.8 1420.0 609.0 C1448.3 609.2 1470.0 610.2 1500.0 610.0 C1530.0 609.8 1567.2 608.2 1600.0 608.0 C1632.8 607.8 1652.0 608.8 1697.0 609.0 C1742.0 609.2 1841.2 609.0 1870.0 609.0" fill="none" stroke="#87ceeb" stroke-width="2" stroke-linejoin="round" shape-rendering="crispEdges"/>
<path d="M931.0 611.0 C942.5 611.5 975.2 613.2 1000.0 614.0 C1024.8 614.8 1053.3 616.0 1080.0 616.0 C1106.7 616.0 1133.3 614.3 1160.0 614.0 C1186.7 613.7 1213.3 613.8 1240.0 614.0 C1266.7 614.2 1293.3 614.8 1320.0 615.0 C1346.7 615.2 1373.3 615.2 1400.0 615.0 C1426.7 614.8 1453.3 613.8 1480.0 614.0 C1506.7 614.2 1533.3 615.8 1560.0 616.0 C1586.7 616.2 1617.2 615.3 1640.0 615.0 C1662.8 614.7 1658.7 614.2 1697.0 614.0 C1735.3 613.8 1841.2 614.0 1870.0 614.0" fill="none" stroke="#ff00ff" stroke-width="2" stroke-linejoin="round" shape-rendering="crispEdges"/>
<path d="M931.0 611.0 C944.2 610.7 983.5 609.7 1010.0 609.0 C1036.5 608.3 1063.3 607.2 1090.0 607.0 C1116.7 606.8 1143.3 607.7 1170.0 608.0 C1196.7 608.3 1223.3 609.2 1250.0 609.0 C1276.7 608.8 1301.7 607.2 1330.0 607.0 C1358.3 606.8 1390.0 607.8 1420.0 608.0 C1450.0 608.2 1480.0 608.2 1510.0 608.0 C1540.0 607.8 1568.8 607.3 1600.0 607.0 C1631.2 606.7 1652.0 606.2 1697.0 606.0 C1742.0 605.8 1841.2 606.0 1870.0 606.0" fill="none" stroke="#008c00" stroke-width="2" stroke-linejoin="round" shape-rendering="crispEdges"/>
<path d="M931.0 611.0 C933.4 612.7 938.8 618.8 945.5 621.0 C952.2 623.2 965.1 620.2 971.0 624.0 C976.9 627.8 978.7 634.3 981.0 644.0 C983.3 653.7 983.1 663.6 985.0 682.0 C986.9 700.4 989.2 730.6 992.3 754.5 C995.4 778.4 1000.2 809.4 1003.7 825.5 C1007.2 841.6 1010.3 851.0 1013.6 851.0 C1016.9 851.0 1020.0 841.6 1023.5 825.5 C1027.0 809.4 1031.6 778.4 1034.9 754.5 C1038.2 730.6 1040.1 706.6 1043.4 682.0 C1046.7 657.4 1050.8 620.7 1054.8 607.0 C1058.8 593.3 1061.6 601.4 1067.5 600.0 C1073.4 598.6 1081.2 598.0 1090.0 598.5 C1098.8 599.0 1108.3 602.0 1120.0 602.8 C1131.7 603.5 1153.3 603.0 1160.0 603.0" fill="none" stroke="#87ceeb" stroke-width="2" stroke-linejoin="round" shape-rendering="crispEdges"/>
<path d="M931.0 611.0 C935.8 611.0 951.8 610.2 960.0 611.0 C968.2 611.8 973.9 609.5 980.0 616.0 C986.1 622.5 991.2 638.7 996.6 650.0 C1002.0 661.3 1007.7 666.6 1012.2 684.0 C1016.7 701.4 1020.0 730.9 1023.5 754.5 C1027.0 778.1 1029.2 810.6 1033.5 825.5 C1037.8 840.4 1044.5 844.0 1049.0 844.0 C1053.5 844.0 1056.8 840.4 1060.4 825.5 C1064.0 810.6 1066.9 778.4 1070.4 754.5 C1074.0 730.6 1077.9 706.6 1081.7 682.0 C1085.5 657.4 1088.3 620.0 1093.0 607.0 C1097.7 594.0 1102.2 604.2 1110.0 604.0 C1117.8 603.8 1135.0 605.7 1140.0 606.0" fill="none" stroke="#87ceeb" stroke-width="2" stroke-linejoin="round" shape-rendering="crispEdges"/>
<path d="M931.0 611.0 C937.5 611.3 957.7 610.8 970.0 613.0 C982.3 615.2 998.0 620.7 1005.0 624.0 C1012.0 627.3 1009.6 624.5 1012.0 633.0 C1014.4 641.5 1016.8 654.8 1019.3 675.0 C1021.8 695.2 1024.6 729.4 1027.0 754.5 C1029.4 779.6 1029.1 803.0 1033.5 825.5 C1037.9 848.0 1047.6 889.3 1053.3 889.3 C1059.0 889.3 1063.5 848.0 1067.5 825.5 C1071.5 803.0 1074.1 778.4 1077.4 754.5 C1080.7 730.6 1084.1 706.6 1087.4 682.0 C1090.7 657.4 1092.1 620.2 1097.3 607.0 C1102.5 593.8 1109.8 603.3 1118.6 602.8 C1127.4 602.3 1144.8 603.8 1150.0 604.0" fill="none" stroke="#008c00" stroke-width="2" stroke-linejoin="round" shape-rendering="crispEdges"/>
<path d="M931.0 611.0 C935.8 610.8 952.4 609.5 960.0 610.0 C967.6 610.5 971.1 609.3 976.7 614.0 C982.3 618.7 987.9 630.0 993.8 638.0 C999.7 646.0 1007.5 659.0 1012.2 662.3 C1016.9 665.6 1018.5 663.9 1022.0 658.0 C1025.5 652.1 1030.7 636.2 1033.5 627.0 C1036.3 617.8 1036.0 611.8 1038.8 603.0 C1041.5 594.2 1046.0 581.1 1050.0 574.2 C1054.0 567.3 1058.4 561.4 1062.9 561.4 C1067.5 561.4 1072.5 568.9 1077.3 574.2 C1082.1 579.5 1086.3 588.8 1091.7 593.4 C1097.1 598.0 1101.5 599.9 1109.5 602.0 C1117.5 604.1 1134.9 605.3 1140.0 606.0" fill="none" stroke="#008c00" stroke-width="2" stroke-linejoin="round" shape-rendering="crispEdges"/>
<path d="M931.0 611.0 C937.5 610.5 961.0 609.8 970.0 608.0 C979.0 606.2 980.2 606.2 985.0 600.0 C989.8 593.8 994.1 577.7 998.8 571.0 C1003.5 564.3 1008.7 559.3 1013.2 559.8 C1017.7 560.3 1022.5 567.0 1026.0 574.2 C1029.5 581.4 1030.9 591.9 1034.0 603.0 C1037.1 614.1 1040.2 631.3 1044.8 641.0 C1049.4 650.7 1056.1 660.0 1061.8 661.0 C1067.5 662.0 1073.2 652.4 1078.9 646.7 C1084.6 641.0 1089.1 631.6 1095.9 626.9 C1102.8 622.2 1111.0 620.5 1120.0 618.4 C1129.0 616.2 1145.0 614.7 1150.0 614.0" fill="none" stroke="#ff00ff" stroke-width="2" stroke-linejoin="round" shape-rendering="crispEdges"/>
<path d="M931.0 611.0 C935.0 610.2 947.8 607.8 955.0 606.0 C962.2 604.2 969.4 611.0 974.0 600.0 C978.6 589.0 979.7 561.8 982.8 540.0 C985.9 518.2 989.5 484.2 992.4 469.0 C995.3 453.8 998.1 455.8 1000.4 449.0 C1002.7 442.2 1003.6 432.8 1006.0 428.0 C1008.4 423.2 1011.8 420.2 1014.8 420.5 C1017.8 420.8 1020.8 421.9 1024.0 430.0 C1027.2 438.1 1030.2 450.7 1034.0 469.0 C1037.8 487.3 1043.3 525.2 1046.8 540.0 C1050.3 554.8 1052.2 553.7 1054.9 558.0 C1057.6 562.3 1059.4 562.8 1062.9 566.0 C1066.4 569.2 1070.9 572.3 1075.7 577.4 C1080.5 582.5 1086.0 592.2 1091.7 596.6 C1097.4 601.0 1107.0 602.8 1110.0 604.0" fill="none" stroke="#87ceeb" stroke-width="2" stroke-linejoin="round" shape-rendering="crispEdges"/>
<path d="M931.0 611.0 C935.8 610.7 951.4 611.4 960.0 609.0 C968.6 606.6 976.6 602.9 982.8 596.6 C989.0 590.3 992.9 578.5 997.2 571.0 C1001.5 563.5 1005.5 557.0 1008.4 551.8 C1011.3 546.6 1011.6 553.8 1014.8 540.0 C1018.0 526.2 1023.4 492.8 1027.6 469.0 C1031.8 445.2 1037.1 411.2 1039.8 397.0 C1042.5 382.8 1042.3 387.0 1044.0 384.0 C1045.7 381.0 1048.0 378.9 1050.0 378.9 C1052.0 378.9 1054.2 381.0 1056.0 384.0 C1057.8 387.0 1058.0 382.8 1060.6 397.0 C1063.2 411.2 1068.5 445.2 1071.8 469.0 C1075.1 492.8 1077.7 519.8 1080.5 540.0 C1083.3 560.2 1086.4 578.5 1088.5 590.0 C1090.6 601.5 1090.5 605.5 1093.3 609.0 C1096.0 612.5 1103.0 610.7 1105.0 611.0" fill="none" stroke="#ff00ff" stroke-width="2" stroke-linejoin="round" shape-rendering="crispEdges"/>
<path d="M931.0 611.0 C935.0 609.8 947.9 606.4 955.0 604.0 C962.1 601.6 968.9 607.3 973.8 596.6 C978.7 585.9 981.3 561.3 984.4 540.0 C987.5 518.7 989.7 492.8 992.4 469.0 C995.1 445.2 997.8 415.2 1000.4 397.0 C1003.0 378.8 1005.4 371.8 1008.0 360.0 C1010.6 348.2 1013.6 335.7 1015.8 326.0 C1018.0 316.3 1018.8 309.6 1021.2 302.0 C1023.6 294.4 1027.1 281.2 1030.2 280.2 C1033.3 279.2 1035.7 288.4 1040.0 296.0 C1044.3 303.6 1051.5 309.2 1055.8 326.0 C1060.1 342.8 1062.7 373.2 1066.0 397.0 C1069.3 420.8 1072.8 445.2 1075.7 469.0 C1078.7 492.8 1080.8 518.2 1083.7 540.0 C1086.6 561.8 1088.6 589.3 1093.0 600.0 C1097.4 610.7 1103.8 603.0 1110.0 604.0 C1116.2 605.0 1126.7 605.7 1130.0 606.0" fill="none" stroke="#008c00" stroke-width="2" stroke-linejoin="round" shape-rendering="crispEdges"/>
<path d="M1182.3 605.5 C1188.7 604.6 1212.1 605.0 1220.8 600.0 C1229.5 595.0 1230.6 584.9 1234.5 575.3 C1238.4 565.7 1241.0 551.1 1244.0 542.4 C1247.0 533.7 1249.3 526.7 1252.3 523.0 C1255.3 519.3 1259.2 520.4 1262.0 520.4 C1264.8 520.4 1266.5 524.5 1268.8 523.1 C1271.1 521.7 1273.2 517.7 1275.7 512.2 C1278.2 506.7 1281.2 495.2 1284.0 490.2 C1286.8 485.2 1289.7 482.0 1292.2 482.0 C1294.7 482.0 1296.3 480.6 1299.0 490.2 C1301.7 499.8 1305.6 524.1 1308.6 539.6 C1311.6 555.1 1314.4 572.8 1316.9 583.5 C1319.4 594.2 1319.6 599.9 1323.7 604.0 C1327.8 608.1 1338.6 607.5 1341.6 608.2" fill="none" stroke="#008c00" stroke-width="2" stroke-linejoin="round" shape-rendering="crispEdges"/>
<path d="M1190.0 611.0 C1195.1 610.8 1210.2 613.3 1220.8 609.6 C1231.4 605.9 1245.5 596.5 1253.7 589.0 C1261.9 581.5 1266.1 573.4 1270.2 564.3 C1274.3 555.1 1275.7 543.5 1278.4 534.1 C1281.2 524.7 1284.4 513.3 1286.7 508.0 C1289.0 502.7 1289.9 502.3 1292.2 502.5 C1294.5 502.7 1297.7 502.8 1300.4 509.4 C1303.1 516.0 1305.8 531.3 1308.6 542.3 C1311.3 553.3 1314.4 564.8 1316.9 575.3 C1319.4 585.8 1321.0 599.8 1323.7 605.5 C1326.4 611.2 1331.7 608.9 1333.3 609.6" fill="none" stroke="#ff00ff" stroke-width="2" stroke-linejoin="round" shape-rendering="crispEdges"/>
<path d="M1150.0 603.0 C1158.3 603.2 1188.2 603.4 1200.0 604.0 C1211.8 604.6 1214.6 611.7 1220.8 606.9 C1227.0 602.1 1233.2 583.8 1237.3 575.3 C1241.4 566.8 1242.5 560.6 1245.5 556.0 C1248.5 551.4 1251.9 547.3 1255.1 547.8 C1258.3 548.3 1262.2 554.7 1264.7 558.8 C1267.2 562.9 1267.5 567.9 1270.2 572.5 C1273.0 577.1 1277.5 583.5 1281.2 586.3 C1284.9 589.0 1287.6 587.6 1292.2 589.0 C1296.8 590.4 1303.6 591.8 1308.6 594.5 C1313.6 597.2 1317.1 603.4 1322.3 605.5 C1327.5 607.6 1337.0 606.8 1340.0 607.0" fill="none" stroke="#87ceeb" stroke-width="2" stroke-linejoin="round" shape-rendering="crispEdges"/>
<path d="M1177.0 622.0 C1180.8 621.7 1192.7 620.5 1200.0 620.0 C1207.3 619.5 1214.6 616.6 1220.8 619.2 C1227.0 621.8 1231.8 624.3 1237.3 635.7 C1242.8 647.1 1248.7 685.5 1253.7 687.8 C1258.7 690.1 1262.8 661.8 1267.4 649.4 C1272.0 637.0 1275.8 620.3 1281.2 613.7 C1286.6 607.1 1296.9 610.6 1300.0 610.0" fill="none" stroke="#87ceeb" stroke-width="2" stroke-linejoin="round" shape-rendering="crispEdges"/>
<path d="M1160.0 614.0 C1166.7 614.3 1190.3 615.6 1200.0 616.0 C1209.7 616.4 1209.0 614.6 1218.0 616.5 C1227.0 618.4 1245.5 621.9 1253.7 627.4 C1261.9 632.9 1263.3 640.7 1267.4 649.4 C1271.5 658.1 1274.3 668.2 1278.4 679.6 C1282.5 691.0 1287.6 717.1 1292.2 718.0 C1296.8 718.9 1301.3 700.5 1305.9 685.0 C1310.5 669.5 1315.9 636.6 1319.6 624.7 C1323.2 612.8 1322.7 615.7 1327.8 613.7 C1332.9 611.8 1346.3 613.1 1350.0 613.0" fill="none" stroke="#87ceeb" stroke-width="2" stroke-linejoin="round" shape-rendering="crispEdges"/>
<path d="M1155.0 616.0 C1162.5 615.7 1189.0 614.4 1200.0 614.0 C1211.0 613.6 1211.8 611.9 1220.8 613.7 C1229.8 615.5 1245.5 618.3 1253.7 624.7 C1261.9 631.1 1265.6 640.8 1270.2 652.2 C1274.8 663.6 1277.5 677.1 1281.2 693.3 C1284.9 709.5 1288.6 745.0 1292.2 749.6 C1295.8 754.2 1299.9 731.1 1303.1 720.8 C1306.3 710.5 1308.7 701.5 1311.4 687.8 C1314.2 674.1 1317.3 649.8 1319.6 638.4 C1321.9 627.0 1321.9 621.9 1325.1 619.2 C1328.3 616.5 1333.0 622.4 1338.8 622.0 C1344.6 621.6 1356.5 617.8 1360.0 617.0" fill="none" stroke="#008c00" stroke-width="2" stroke-linejoin="round" shape-rendering="crispEdges"/>
<path d="M1260.0 610.0 C1262.6 610.6 1271.2 617.2 1275.7 613.7 C1280.2 610.2 1283.1 594.0 1286.7 589.0 C1290.3 584.0 1293.5 583.5 1297.6 583.5 C1301.7 583.5 1307.3 584.9 1311.4 589.0 C1315.5 593.1 1317.5 604.7 1322.3 608.2 C1327.1 611.7 1337.0 609.7 1340.0 610.0" fill="none" stroke="#008c00" stroke-width="2" stroke-linejoin="round" shape-rendering="crispEdges"/>
<path d="M1210.0 611.0 C1213.6 610.5 1224.3 610.5 1231.8 608.2 C1239.3 605.9 1248.7 597.2 1255.1 597.2 C1261.5 597.2 1265.4 602.2 1270.2 608.2 C1275.0 614.2 1279.9 628.0 1284.0 633.0 C1288.1 638.0 1290.9 638.4 1295.0 638.4 C1299.1 638.4 1303.1 636.4 1308.6 633.0 C1314.1 629.6 1321.4 621.0 1327.8 617.8 C1334.2 614.6 1340.0 614.5 1347.0 613.7 C1354.0 612.9 1366.2 613.1 1370.0 613.0" fill="none" stroke="#ff00ff" stroke-width="2" stroke-linejoin="round" shape-rendering="crispEdges"/>
<path d="M1210.0 613.0 C1213.6 613.6 1223.6 614.5 1231.8 616.5 C1240.0 618.5 1251.9 624.7 1259.2 624.7 C1266.5 624.7 1270.6 618.6 1275.7 616.5 C1280.8 614.4 1287.6 612.8 1290.0 612.0" fill="none" stroke="#008c00" stroke-width="2" stroke-linejoin="round" shape-rendering="crispEdges"/>
<path d="M1440.0 602.0 C1443.0 601.5 1453.4 600.3 1457.8 599.1 C1462.2 597.9 1463.3 597.8 1466.5 594.8 C1469.7 591.8 1472.9 585.7 1476.9 580.8 C1481.0 575.9 1487.3 567.8 1490.8 565.5 C1494.3 563.2 1495.5 565.5 1497.8 566.9 C1500.1 568.3 1502.4 573.6 1504.7 573.9 C1507.0 574.2 1509.1 573.1 1511.7 568.7 C1514.3 564.4 1517.5 553.0 1520.4 547.8 C1523.3 542.6 1526.5 537.7 1529.1 537.4 C1531.7 537.1 1533.7 541.6 1536.0 546.0 C1538.3 550.4 1540.7 556.2 1543.0 563.5 C1545.3 570.8 1547.7 582.3 1550.0 589.5 C1552.3 596.7 1551.7 604.6 1556.9 606.9 C1562.1 609.2 1577.2 604.0 1581.2 603.4" fill="none" stroke="#008c00" stroke-width="2" stroke-linejoin="round" shape-rendering="crispEdges"/>
<path d="M1450.0 610.0 C1453.3 609.2 1461.0 607.6 1470.0 605.2 C1479.0 602.8 1497.0 599.7 1503.9 595.6 C1510.9 591.5 1508.7 587.6 1511.7 580.8 C1514.7 574.0 1519.2 560.1 1522.1 554.8 C1525.0 549.4 1526.8 548.7 1529.1 548.7 C1531.4 548.7 1533.1 548.6 1536.0 554.8 C1538.9 561.0 1543.3 577.3 1546.5 586.0 C1549.7 594.7 1552.3 602.2 1555.2 606.9 C1558.1 611.5 1558.1 613.0 1563.9 613.9 C1569.7 614.8 1585.7 612.3 1590.0 612.0" fill="none" stroke="#ff00ff" stroke-width="2" stroke-linejoin="round" shape-rendering="crispEdges"/>
<path d="M1450.0 607.0 C1453.0 606.7 1462.7 608.1 1468.0 605.2 C1473.3 602.3 1478.1 593.6 1482.1 589.5 C1486.0 585.4 1488.8 581.1 1491.7 580.8 C1494.6 580.5 1496.5 584.6 1499.5 587.8 C1502.5 591.0 1505.1 598.0 1510.0 600.0 C1514.9 602.0 1522.9 598.9 1529.0 600.0 C1535.1 601.1 1539.7 605.6 1546.5 606.9 C1553.3 608.2 1566.1 607.8 1570.0 608.0" fill="none" stroke="#87ceeb" stroke-width="2" stroke-linejoin="round" shape-rendering="crispEdges"/>
<path d="M1445.0 617.0 C1448.3 617.4 1459.5 616.7 1464.8 619.1 C1470.1 621.5 1472.6 627.1 1476.9 631.3 C1481.2 635.5 1486.7 643.4 1490.8 644.3 C1494.9 645.2 1498.1 640.7 1501.3 636.5 C1504.5 632.3 1506.0 622.5 1510.0 619.1 C1514.0 615.7 1522.5 616.5 1525.0 616.0" fill="none" stroke="#87ceeb" stroke-width="2" stroke-linejoin="round" shape-rendering="crispEdges"/>
<path d="M1440.0 616.0 C1444.7 616.2 1459.2 616.0 1468.2 617.4 C1477.2 618.8 1488.5 622.0 1494.3 624.3 C1500.1 626.6 1500.1 626.9 1503.0 631.3 C1505.9 635.6 1508.8 642.9 1511.7 650.4 C1514.6 657.9 1517.5 669.1 1520.4 676.5 C1523.3 683.9 1526.2 694.7 1529.1 694.7 C1532.0 694.7 1534.9 683.9 1537.8 676.5 C1540.7 669.1 1543.6 659.1 1546.5 650.4 C1549.4 641.7 1552.3 629.5 1555.2 624.3 C1558.1 619.1 1559.6 619.5 1563.9 619.1 C1568.2 618.7 1572.5 622.0 1581.2 621.7 C1589.9 621.4 1610.2 618.1 1616.0 617.4" fill="none" stroke="#008c00" stroke-width="2" stroke-linejoin="round" shape-rendering="crispEdges"/>
<path d="M1490.0 615.0 C1492.2 615.4 1499.4 614.4 1503.0 617.4 C1506.6 620.4 1507.4 623.7 1511.7 633.0 C1516.0 642.3 1523.9 670.1 1529.1 673.0 C1534.3 675.9 1538.7 659.7 1543.0 650.4 C1547.3 641.1 1549.9 623.1 1555.2 617.4 C1560.5 611.7 1571.7 616.2 1575.0 616.0" fill="none" stroke="#87ceeb" stroke-width="2" stroke-linejoin="round" shape-rendering="crispEdges"/>
<path d="M1495.0 615.0 C1497.5 615.4 1505.8 615.9 1510.0 617.4 C1514.2 618.9 1517.2 622.4 1520.4 624.3 C1523.6 626.2 1524.8 628.7 1529.1 628.7 C1533.4 628.7 1541.3 626.2 1546.5 624.3 C1551.7 622.4 1554.8 618.9 1560.4 617.4 C1566.0 615.9 1576.7 615.4 1580.0 615.0" fill="none" stroke="#ff00ff" stroke-width="2" stroke-linejoin="round" shape-rendering="crispEdges"/>
<path d="M1495.0 609.0 C1497.8 608.7 1505.7 609.7 1511.7 607.0 C1517.7 604.3 1525.0 594.5 1530.8 593.0 C1536.6 591.5 1542.1 595.4 1546.5 598.0 C1550.9 600.6 1552.2 606.7 1557.0 608.7 C1561.8 610.7 1572.0 609.8 1575.0 610.0" fill="none" stroke="#008c00" stroke-width="2" stroke-linejoin="round" shape-rendering="crispEdges"/>
<path d="M931.5 258 V896.5 H1866" stroke="#fff" stroke-width="1.3" fill="none"/>
<path d="M931.5 255.5 L927 265 L931.5 263.5 L936 265 Z" fill="#fff"/>
<path d="M1870.5 896.5 L1861 892 L1862.5 896.5 L1861 901 Z" fill="#fff"/>
<path d="M928 255.2 H931 M928 269.4 H931 M928 283.7 H931 M928 297.9 H931 M928 312.2 H931 M928 326.4 H931 M928 340.6 H931 M928 354.9 H931 M928 369.1 H931 M928 383.4 H931 M928 397.6 H931 M928 411.8 H931 M928 426.1 H931 M928 440.3 H931 M928 454.6 H931 M928 468.8 H931 M928 483.0 H931 M928 497.3 H931 M928 511.5 H931 M928 525.8 H931 M928 540.0 H931 M928 554.2 H931 M928 568.5 H931 M928 582.7 H931 M928 597.0 H931 M928 611.2 H931 M928 625.4 H931 M928 639.7 H931 M928 653.9 H931 M928 668.2 H931 M928 682.4 H931 M928 696.6 H931 M928 710.9 H931 M928 725.1 H931 M928 739.4 H931 M928 753.6 H931 M928 767.8 H931 M928 782.1 H931 M928 796.3 H931 M928 810.6 H931 M928 824.8 H931 M928 839.0 H931 M928 853.3 H931 M928 867.5 H931 M928 881.8 H931 M928 896.0 H931 M931.0 896 V900 M978.0 896 V900 M1024.9 896 V900 M1071.8 896 V900 M1118.8 896 V900 M1165.8 896 V900 M1212.7 896 V900 M1259.7 896 V900 M1306.6 896 V900 M1353.5 896 V900 M1400.5 896 V900 M1447.5 896 V900 M1494.4 896 V900 M1541.3 896 V900 M1588.3 896 V900 M1635.2 896 V900 M1682.2 896 V900 M1729.2 896 V900 M1776.1 896 V900 M1823.1 896 V900 M1870.0 896 V900" stroke="#fff" stroke-width="1.3"/>
<text x="926" y="262.2" fill="#fff" text-anchor="end">25.00</text>
<text x="926" y="333.4" fill="#fff" text-anchor="end">20.00</text>
<text x="926" y="404.6" fill="#fff" text-anchor="end">15.00</text>
<text x="926" y="475.8" fill="#fff" text-anchor="end">10.00</text>
<text x="926" y="547.0" fill="#fff" text-anchor="end">5.00</text>
<text x="926" y="618.2" fill="#fff" text-anchor="end">0.0</text>
<text x="926" y="689.4" fill="#fff" text-anchor="end">-5.00</text>
<text x="926" y="760.6" fill="#fff" text-anchor="end">-10.00</text>
<text x="926" y="831.8" fill="#fff" text-anchor="end">-15.00</text>
<text x="926" y="903.0" fill="#fff" text-anchor="end">-20.00</text>
<text x="931.0" y="920" fill="#fff" text-anchor="middle">0.0</text>
<text x="1165.8" y="920" fill="#fff" text-anchor="middle">0.0025</text>
<text x="1400.5" y="920" fill="#fff" text-anchor="middle">0.005</text>
<text x="1635.2" y="920" fill="#fff" text-anchor="middle">0.0075</text>
<text x="1870.0" y="920" fill="#fff" text-anchor="middle">0.01</text>
<text x="877" y="235" fill="#fff" xml:space="preserve">plot(work_transfo_decalage_phase_tr_nl_243ohms_ct2csv_tkfab.csv) |  9 Jan 2014</text>
<text x="1310" y="939" fill="#fff" xml:space="preserve">time , unit : s</text>
<text transform="translate(805 759.5) rotate(-90)" x="0" y="0" fill="#fff" xml:space="preserve">I(IIsec-) and others , unit : A</text>
<path d="M931 281 H1870" stroke="#0000ff" stroke-width="2" stroke-dasharray="6 2"/>
<rect x="1020" y="271" width="20" height="20" fill="none" stroke="#0000ff" stroke-width="2"/>
<rect x="1027" y="278" width="6" height="6" fill="#0000ff"/>
<text x="1050" y="268" fill="#0000ff">0</text>
<path d="M931 481 H1870" stroke="#ff0000" stroke-width="2" stroke-dasharray="6 2"/>
<rect x="1276" y="471" width="20" height="20" fill="none" stroke="#ff0000" stroke-width="2"/>
<rect x="1283" y="478" width="6" height="6" fill="#ff0000"/>
<path d="M1312.5 452 V467" stroke="#ff0000" stroke-width="1.6"/><path d="M1309 455 L1312.5 452" stroke="#ff0000" stroke-width="1.4"/>
<rect x="1697.5" y="265.5" width="163" height="652" fill="#000" stroke="#fff" stroke-width="1"/>
<rect x="1701" y="277.5" width="14" height="4" fill="#008000"/>
<text x="1725" y="286" fill="#fff">I(IIsec-)</text>
<rect x="1701" y="301.5" width="14" height="4" fill="#87ceeb"/>
<text x="1725" y="310" fill="#fff">I(IIsec+)</text>
<rect x="1701" y="325.5" width="14" height="4" fill="#000"/>
<text x="1725" y="334" fill="#fff">I(Rprim_a)</text>
<rect x="1701" y="349.5" width="14" height="4" fill="#ff00ff"/>
<text x="1725" y="358" fill="#fff">I(Rprim_b)</text>
<rect x="1701" y="373.5" width="14" height="4" fill="#008000"/>
<text x="1725" y="382" fill="#fff">I(Rprim_c)</text>
<rect x="1701" y="397.5" width="14" height="4" fill="#87ceeb"/>
<text x="1725" y="406" fill="#fff">I(Isec+)</text>
<rect x="1701" y="421.5" width="14" height="4" fill="#000"/>
<text x="1725" y="430" fill="#fff">I(IIIsec+)</text>
<rect x="1701" y="445.5" width="14" height="4" fill="#ff00ff"/>
<text x="1725" y="454" fill="#fff">I(Isec-)</text>
<rect x="1701" y="469.5" width="14" height="4" fill="#008000"/>
<text x="1725" y="478" fill="#fff">I(IIIsec-)</text>
<rect x="1701" y="493.5" width="14" height="4" fill="#87ceeb"/>
<text x="1725" y="502" fill="#fff">I(Rsec_a)</text>
<rect x="1701" y="517.5" width="14" height="4" fill="#000"/>
<text x="1725" y="526" fill="#fff">I(Rsec_b)</text>
<rect x="1701" y="541.5" width="14" height="4" fill="#ff00ff"/>
<text x="1725" y="550" fill="#fff">I(Rsec_c)</text>
<rect x="1701" y="565.5" width="14" height="4" fill="#008000"/>
<text x="1725" y="574" fill="#fff">I(Va)</text>
<rect x="1701" y="589.5" width="14" height="4" fill="#87ceeb"/>
<text x="1725" y="598" fill="#fff">I(Iprim+)</text>
<rect x="1701" y="613.5" width="14" height="4" fill="#000"/>
<text x="1725" y="622" fill="#fff">I(Iprim-)</text>
<rect x="1701" y="637.5" width="14" height="4" fill="#ff00ff"/>
<text x="1725" y="646" fill="#fff">I(rIII)</text>
<rect x="1701" y="661.5" width="14" height="4" fill="#008000"/>
<text x="1725" y="670" fill="#fff">I(Vb)</text>
<rect x="1701" y="685.5" width="14" height="4" fill="#87ceeb"/>
<text x="1725" y="694" fill="#fff">I(Vc)</text>
<rect x="1701" y="709.5" width="14" height="4" fill="#000"/>
<text x="1725" y="718" fill="#fff">I(IIprim+)</text>
<rect x="1701" y="733.5" width="14" height="4" fill="#ff00ff"/>
<text x="1725" y="742" fill="#fff">I(IIprim-)</text>
<rect x="1701" y="757.5" width="14" height="4" fill="#008000"/>
<text x="1725" y="766" fill="#fff">I(rI)</text>
<rect x="1701" y="781.5" width="14" height="4" fill="#87ceeb"/>
<text x="1725" y="790" fill="#fff">I(IIIprim+)</text>
<rect x="1701" y="805.5" width="14" height="4" fill="#000"/>
<text x="1725" y="814" fill="#fff">I(IIIprim-)</text>
<rect x="1701" y="829.5" width="14" height="4" fill="#ff00ff"/>
<text x="1725" y="838" fill="#fff">I(rII)</text>
<rect x="1701" y="853.5" width="14" height="4" fill="#008000"/>
<text x="1725" y="862" fill="#fff">I(R1)</text>
<rect x="1701" y="877.5" width="14" height="4" fill="#87ceeb"/>
<text x="1725" y="886" fill="#fff">I(R2)</text>
<rect x="1701" y="901.5" width="14" height="4" fill="#000"/>
<text x="1725" y="910" fill="#fff">I(R3)</text>
<path d="M1697 281 H1870" stroke="#0000ff" stroke-width="2" stroke-dasharray="6 2" stroke-dashoffset="0"/>
</svg>
<div style="left:5px;top:964px;width:264px;height:67px;border:1px solid #787878;border-radius:5px;box-sizing:border-box"></div>
<div class="m" style="left:13px;top:956px;color:#e0883c;background:#333333;padding:0 2px 0 1px;">Width x Height</div>
<div style="left:9px;top:985px;width:256px;height:39px;border:1px solid #7c7c7c;border-radius:5px;box-sizing:border-box"></div>
<div class="m" style="left:89px;top:996px;color:#f4f4f4;">1151x735</div>
<div style="left:272px;top:964px;width:1646px;height:67px;border:1px solid #787878;border-radius:5px;box-sizing:border-box"></div>
<div class="m" style="left:280px;top:956px;color:#e0883c;background:#333333;padding:0 2px 0 1px;">Export</div>
<div class="m" style="left:280px;top:996px;color:#f4f4f4;">directory :</div>
<div style="left:429px;top:985px;width:367px;height:39px;border:1px solid #7c7c7c;border-radius:5px;box-sizing:border-box"></div>
<div class="m" style="left:437px;top:996px;color:#f4f4f4;width:352px;overflow:hidden">C:/tclsoft/tkfab/test/mono/qu</div>
<div class="m" style="left:802px;top:996px;color:#f4f4f4;">reset name</div>
<div style="left:928px;top:985px;width:46px;height:38px;background:#737373;border-radius:5px"></div>
<svg style="left:936px;top:990px" width="30" height="30" viewBox="936 990 30 30"><path d="M944.5 998 L957.5 1011.5 M957.5 998 L944.5 1011.5" stroke="#fff" stroke-width="4.2" stroke-linecap="round"/></svg>
<div class="m" style="left:980px;top:996px;color:#f4f4f4;">name :</div>
<div style="left:1070px;top:985px;width:367px;height:39px;border:1px solid #7c7c7c;border-radius:5px;box-sizing:border-box"></div>
<div class="m" style="left:1145px;top:996px;color:#f4f4f4;">export_2plot0_main</div>
<div class="m" style="left:1443px;top:996px;color:#f4f4f4;">dimension :</div>
<div style="left:1593px;top:985px;width:112px;height:39px;border:1px solid #7c7c7c;border-radius:5px;box-sizing:border-box"></div>
<div class="m" style="left:1601px;top:996px;color:#f4f4f4;">1151x735</div>
<div class="m" style="left:1711px;top:996px;color:#f4f4f4;">extension :</div>
<div style="left:1861px;top:985px;width:52px;height:39px;border:1px solid #7c7c7c;border-radius:5px;box-sizing:border-box"></div>
<div class="m" style="left:1869px;top:996px;color:#f4f4f4;">png</div>
<div style="left:8px;top:1040px;width:56px;height:47px;background:#737373;border-radius:5px"></div>
<svg style="left:20px;top:1048px" width="32" height="32" viewBox="0 0 32 32"><path d="M5 4 L26.9 16.2 L5 28 Z" fill="#f0f0f0"/><defs><pattern id="st20_1048" width="2" height="2" patternUnits="userSpaceOnUse"><rect width="1" height="1" fill="#303030"/><rect x="1" y="1" width="1" height="1" fill="#303030"/></pattern></defs><rect width="32" height="32" fill="url(#st20_1048)" shape-rendering="crispEdges"/></svg>
<div style="left:66px;top:1040px;width:1233px;height:47px;border:2px solid #aca89d;box-sizing:border-box"></div>
<div class="m" style="left:658px;top:1056px;color:#f4f4f4;">....</div>
<div style="left:1301px;top:1040px;width:56px;height:47px;background:#737373;border-radius:5px"></div>
<svg style="left:1313px;top:1048px" width="32" height="32" viewBox="0 0 32 32"><defs><radialGradient id="led" cx="0.5" cy="0.85" r="0.75"><stop offset="0" stop-color="#98ff78"/><stop offset="0.55" stop-color="#3cc82c"/><stop offset="1" stop-color="#0a9a0a"/></radialGradient><linearGradient id="ledh" x1="0" y1="0" x2="0" y2="1"><stop offset="0" stop-color="#ffffff"/><stop offset="1" stop-color="#ffffff" stop-opacity="0.15"/></linearGradient></defs><circle cx="15.8" cy="16" r="13" fill="url(#led)" stroke="#0a2e30" stroke-width="1.6"/><ellipse cx="15.8" cy="10" rx="9" ry="5.5" fill="url(#ledh)"/></svg>
<div class="m" style="left:1364px;top:1056px;color:#f4f4f4;">19 Dec 2025 00:15:14</div>
<div style="left:1605px;top:1040px;width:56px;height:47px;background:#737373;border-radius:5px"></div>
<div style="left:1665px;top:1040px;width:56px;height:47px;background:#737373;border-radius:5px"></div>
<div style="left:1725px;top:1040px;width:56px;height:47px;background:#737373;border-radius:5px"></div>
<div style="left:1785px;top:1040px;width:56px;height:47px;background:#737373;border-radius:5px"></div>
<div style="left:1845px;top:1040px;width:56px;height:47px;background:#737373;border-radius:5px"></div>
<svg style="left:1612px;top:1048px" width="42" height="32" viewBox="0 0 42 32"><rect x="12.6" y="2.2" width="14.2" height="6" rx="1.5" fill="#ffffff"/><rect x="5.6" y="6.4" width="30.9" height="21.8" rx="3" fill="#ffffff"/><circle cx="21" cy="16.8" r="5.6" fill="none" stroke="#737373" stroke-width="2.2"/></svg>
<svg style="left:1677px;top:1048px" width="32" height="32" viewBox="0 0 32 32"><path d="M12.5 7 V4.5 Q12.5 3 14 3 H18 Q19.5 3 19.5 4.5 V7" fill="none" stroke="#f0f0f0" stroke-width="1.6"/><rect x="3" y="7" width="26" height="22" rx="2.5" fill="#f0f0f0"/><defs><pattern id="st1677_1048" width="2" height="2" patternUnits="userSpaceOnUse"><rect width="1" height="1" fill="#303030"/><rect x="1" y="1" width="1" height="1" fill="#303030"/></pattern></defs><rect width="32" height="32" fill="url(#st1677_1048)" shape-rendering="crispEdges"/></svg>
<svg style="left:1737px;top:1048px" width="32" height="32" viewBox="0 0 32 32"><path d="M16 2.6 L24 12 H7.9 Z" fill="#f0f0f0"/><rect x="12.8" y="11" width="6.3" height="9.5" rx="0.8" fill="#f0f0f0"/><rect x="2.9" y="20" width="26" height="7.9" rx="1" fill="#f0f0f0"/><rect x="21.4" y="23" width="2" height="2" fill="#737373"/><rect x="25" y="23" width="2" height="2" fill="#737373"/><defs><pattern id="st1737_1048" width="2" height="2" patternUnits="userSpaceOnUse"><rect width="1" height="1" fill="#303030"/><rect x="1" y="1" width="1" height="1" fill="#303030"/></pattern></defs><rect width="32" height="32" fill="url(#st1737_1048)" shape-rendering="crispEdges"/></svg>
<svg style="left:1797px;top:1048px" width="32" height="32" viewBox="0 0 32 32"><rect x="13.1" y="1.7" width="5.6" height="9.5" rx="0.8" fill="#f0f0f0"/><path d="M7.7 10.1 H24.2 L16 20.4 Z" fill="#f0f0f0"/><path d="M4 17.9 H11 L16 23 L21 17.9 H28 Q29 17.9 29 19 V25 Q29 26 28 26 H4 Q2.8 26 2.8 25 V19 Q2.8 17.9 4 17.9 Z" fill="#f0f0f0"/><rect x="21.2" y="21.9" width="2" height="2" fill="#737373"/><rect x="25" y="21.9" width="2" height="2" fill="#737373"/><defs><pattern id="st1797_1048" width="2" height="2" patternUnits="userSpaceOnUse"><rect width="1" height="1" fill="#303030"/><rect x="1" y="1" width="1" height="1" fill="#303030"/></pattern></defs><rect width="32" height="32" fill="url(#st1797_1048)" shape-rendering="crispEdges"/></svg>
<svg style="left:1856px;top:1048px" width="34" height="32" viewBox="0 0 34 32"><rect x="0.9" y="6" width="31.8" height="20.2" rx="10.1" fill="#ffffff"/><circle cx="23.2" cy="16.1" r="8" fill="#737373"/></svg>
<svg style="left:1900px;top:1068px" width="22" height="20" viewBox="1900 1068 22 20"><g fill="#7a7a7a"><circle cx="1916" cy="1073.7" r="1.6"/><circle cx="1910.5" cy="1079.2" r="1.6"/><circle cx="1916" cy="1079.2" r="1.6"/><circle cx="1905" cy="1084.9" r="1.6"/><circle cx="1910.5" cy="1084.9" r="1.6"/><circle cx="1916" cy="1084.9" r="1.6"/></g></svg>
<div style="left:1073px;top:201px;width:212px;height:178px;background:#333333;border:3px solid #e4e4e4;box-sizing:border-box"></div>
<div style="left:1076px;top:212px;width:206px;height:1px;background:repeating-linear-gradient(90deg,#8a8a8a 0 6px,transparent 6px 10px)"></div>
<div class="m" style="left:1105px;top:230px;color:#f4f4f4;font-size:18.33px;">do nothing</div>
<div style="left:1076px;top:258px;width:206px;height:1px;background:#9a9a9a"></div>
<div style="left:1076px;top:265px;width:203px;height:28px;background:#0080ff"></div>
<div class="m" style="left:1105px;top:270px;color:#f4f4f4;font-size:18.33px;">general</div>
<svg style="left:1265px;top:271px" width="8" height="14"><path d="M1 1 L7 7 L1 13 Z" fill="#fff"/></svg>
<div class="m" style="left:1105px;top:298px;color:#f4f4f4;font-size:18.33px;">levels</div>
<svg style="left:1265px;top:299px" width="8" height="14"><path d="M1 1 L7 7 L1 13 Z" fill="#111"/></svg>
<div class="m" style="left:1105px;top:326px;color:#f4f4f4;font-size:18.33px;">time domain</div>
<svg style="left:1265px;top:327px" width="8" height="14"><path d="M1 1 L7 7 L1 13 Z" fill="#111"/></svg>
<div class="m" style="left:1105px;top:354px;color:#f4f4f4;font-size:18.33px;">statistics</div>
<svg style="left:1265px;top:355px" width="8" height="14"><path d="M1 1 L7 7 L1 13 Z" fill="#111"/></svg>
<svg style="left:1085px;top:232px" width="12" height="12"><path d="M1 6 L4.5 10.5 L11 1.5" fill="none" stroke="#111" stroke-width="3.2"/></svg>
<div style="left:1279px;top:263px;width:268px;height:194px;background:#333333;border:3px solid #e4e4e4;box-sizing:border-box"></div>
<div style="left:1282px;top:274px;width:262px;height:1px;background:repeating-linear-gradient(90deg,#8a8a8a 0 6px,transparent 6px 10px)"></div>
<div class="m" style="left:1311px;top:292px;color:#f4f4f4;font-size:18.33px;">at X</div>
<div class="m" style="left:1311px;top:320px;color:#f4f4f4;font-size:18.33px;">at Y</div>
<div class="m" style="left:1311px;top:348px;color:#f4f4f4;font-size:18.33px;">crossing</div>
<div class="m" style="left:1311px;top:376px;color:#f4f4f4;font-size:18.33px;">delta X with Xhairs</div>
<div class="m" style="left:1311px;top:404px;color:#f4f4f4;font-size:18.33px;">delta Y with Xhairs</div>
<div class="m" style="left:1311px;top:432px;color:#f4f4f4;font-size:18.33px;">&#8706; at x</div>
<svg style="left:1291px;top:406px" width="12" height="12"><path d="M1 6 L4.5 10.5 L11 1.5" fill="none" stroke="#111" stroke-width="3.2"/></svg>
</body></html>
